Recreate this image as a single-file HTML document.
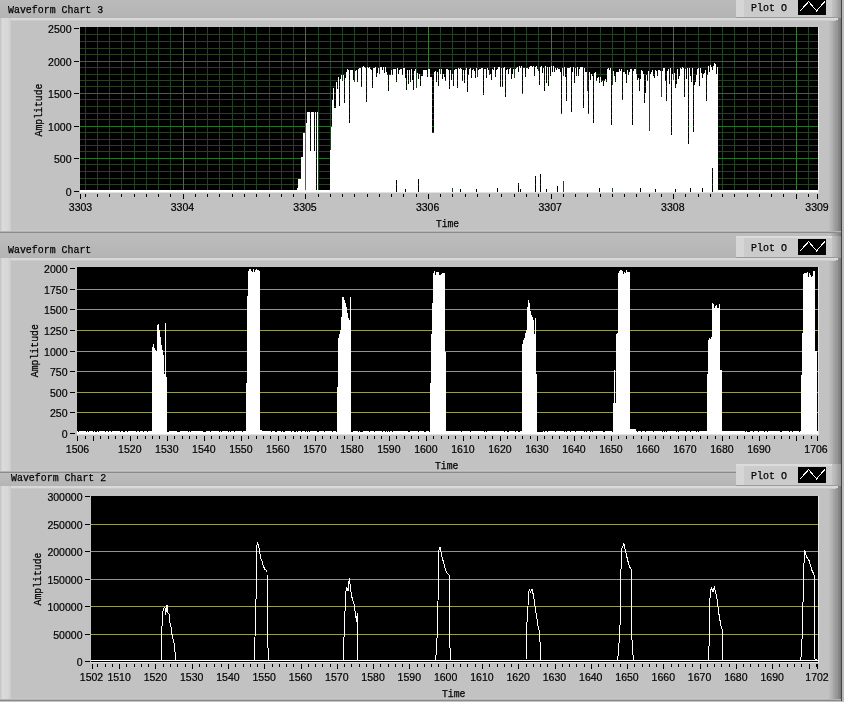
<!DOCTYPE html>
<html><head><meta charset="utf-8"><style>html,body{margin:0;padding:0;background:#c2c2c2;overflow:hidden}svg{display:block;will-change:transform}</style></head>
<body><svg width="844" height="702" viewBox="0 0 844 702" shape-rendering="crispEdges">
<defs><linearGradient id="bandg" x1="0" y1="0" x2="0" y2="1"><stop offset="0" stop-color="#bdbdbd"/><stop offset="1" stop-color="#b4b4b4"/></linearGradient></defs>
<rect x="0" y="0" width="844" height="702" fill="#c2c2c2"/>
<rect x="0" y="-8" width="844" height="26" fill="url(#bandg)"/>
<rect x="828" y="-8" width="1" height="26" fill="#c0c0c0"/>
<rect x="829" y="-8" width="1" height="26" fill="#bdbdbd"/>
<rect x="830" y="-8" width="1" height="26" fill="#b8b8b8"/>
<rect x="831" y="-8" width="1" height="26" fill="#b4b4b4"/>
<rect x="832" y="-8" width="1" height="26" fill="#b0b0b0"/>
<rect x="833" y="-8" width="1" height="26" fill="#a6a6a6"/>
<rect x="834" y="-8" width="1" height="26" fill="#a2a2a2"/>
<rect x="835" y="-8" width="1" height="26" fill="#9c9c9c"/>
<rect x="836" y="-8" width="1" height="26" fill="#989898"/>
<rect x="837" y="-8" width="1" height="26" fill="#949494"/>
<rect x="838" y="-8" width="1" height="26" fill="#888888"/>
<rect x="839" y="-8" width="1" height="26" fill="#848484"/>
<rect x="840" y="-8" width="1" height="26" fill="#7a7a7a"/>
<rect x="841" y="-8" width="1" height="26" fill="#444444"/>
<rect x="842" y="-8" width="1" height="26" fill="#bbbbbb"/>
<rect x="843" y="-8" width="1" height="26" fill="#bababa"/>
<rect x="0" y="18" width="844" height="215" fill="#c2c2c2"/>
<rect x="828" y="18" width="1" height="215" fill="#c0c0c0"/>
<rect x="829" y="18" width="1" height="215" fill="#bdbdbd"/>
<rect x="830" y="18" width="1" height="215" fill="#b8b8b8"/>
<rect x="831" y="18" width="1" height="215" fill="#b4b4b4"/>
<rect x="832" y="18" width="1" height="215" fill="#b0b0b0"/>
<rect x="833" y="18" width="1" height="215" fill="#a6a6a6"/>
<rect x="834" y="18" width="1" height="215" fill="#a2a2a2"/>
<rect x="835" y="18" width="1" height="215" fill="#9c9c9c"/>
<rect x="836" y="18" width="1" height="215" fill="#989898"/>
<rect x="837" y="18" width="1" height="215" fill="#949494"/>
<rect x="838" y="18" width="1" height="215" fill="#888888"/>
<rect x="839" y="18" width="1" height="215" fill="#848484"/>
<rect x="840" y="18" width="1" height="215" fill="#7a7a7a"/>
<rect x="841" y="18" width="1" height="215" fill="#444444"/>
<rect x="842" y="18" width="1" height="215" fill="#bbbbbb"/>
<rect x="843" y="18" width="1" height="215" fill="#bababa"/>
<rect x="0" y="18" width="838" height="2" fill="#d9d9d9"/>
<rect x="0" y="20" width="836" height="1" fill="#cacaca"/>
<rect x="0" y="18" width="1" height="214" fill="#c8c8c8"/>
<rect x="1" y="18" width="1" height="214" fill="#d0d0d0"/>
<rect x="2" y="18" width="1" height="214" fill="#dadada"/>
<rect x="3" y="18" width="1" height="214" fill="#dbdbdb"/>
<rect x="4" y="18" width="1" height="214" fill="#d8d8d8"/>
<rect x="5" y="18" width="1" height="214" fill="#d8d8d8"/>
<rect x="6" y="18" width="1" height="214" fill="#d8d8d8"/>
<rect x="7" y="18" width="1" height="214" fill="#d8d8d8"/>
<rect x="8" y="18" width="1" height="214" fill="#d4d4d4"/>
<rect x="9" y="18" width="1" height="214" fill="#d2d2d2"/>
<rect x="10" y="18" width="1" height="214" fill="#cccccc"/>
<rect x="11" y="230" width="817" height="1" fill="#c7c7c7"/>
<rect x="0" y="231" width="841" height="1" fill="#b4b4b4"/>
<rect x="0" y="232" width="841" height="1" fill="#8a8a8a"/>
<rect x="0" y="233" width="844" height="25" fill="url(#bandg)"/>
<rect x="828" y="233" width="1" height="25" fill="#c0c0c0"/>
<rect x="829" y="233" width="1" height="25" fill="#bdbdbd"/>
<rect x="830" y="233" width="1" height="25" fill="#b8b8b8"/>
<rect x="831" y="233" width="1" height="25" fill="#b4b4b4"/>
<rect x="832" y="233" width="1" height="25" fill="#b0b0b0"/>
<rect x="833" y="233" width="1" height="25" fill="#a6a6a6"/>
<rect x="834" y="233" width="1" height="25" fill="#a2a2a2"/>
<rect x="835" y="233" width="1" height="25" fill="#9c9c9c"/>
<rect x="836" y="233" width="1" height="25" fill="#989898"/>
<rect x="837" y="233" width="1" height="25" fill="#949494"/>
<rect x="838" y="233" width="1" height="25" fill="#888888"/>
<rect x="839" y="233" width="1" height="25" fill="#848484"/>
<rect x="840" y="233" width="1" height="25" fill="#7a7a7a"/>
<rect x="841" y="233" width="1" height="25" fill="#444444"/>
<rect x="842" y="233" width="1" height="25" fill="#bbbbbb"/>
<rect x="843" y="233" width="1" height="25" fill="#bababa"/>
<rect x="0" y="258" width="844" height="215" fill="#c2c2c2"/>
<rect x="828" y="258" width="1" height="215" fill="#c0c0c0"/>
<rect x="829" y="258" width="1" height="215" fill="#bdbdbd"/>
<rect x="830" y="258" width="1" height="215" fill="#b8b8b8"/>
<rect x="831" y="258" width="1" height="215" fill="#b4b4b4"/>
<rect x="832" y="258" width="1" height="215" fill="#b0b0b0"/>
<rect x="833" y="258" width="1" height="215" fill="#a6a6a6"/>
<rect x="834" y="258" width="1" height="215" fill="#a2a2a2"/>
<rect x="835" y="258" width="1" height="215" fill="#9c9c9c"/>
<rect x="836" y="258" width="1" height="215" fill="#989898"/>
<rect x="837" y="258" width="1" height="215" fill="#949494"/>
<rect x="838" y="258" width="1" height="215" fill="#888888"/>
<rect x="839" y="258" width="1" height="215" fill="#848484"/>
<rect x="840" y="258" width="1" height="215" fill="#7a7a7a"/>
<rect x="841" y="258" width="1" height="215" fill="#444444"/>
<rect x="842" y="258" width="1" height="215" fill="#bbbbbb"/>
<rect x="843" y="258" width="1" height="215" fill="#bababa"/>
<rect x="0" y="258" width="838" height="2" fill="#d9d9d9"/>
<rect x="0" y="260" width="836" height="1" fill="#cacaca"/>
<rect x="0" y="258" width="1" height="214" fill="#c8c8c8"/>
<rect x="1" y="258" width="1" height="214" fill="#d0d0d0"/>
<rect x="2" y="258" width="1" height="214" fill="#dadada"/>
<rect x="3" y="258" width="1" height="214" fill="#dbdbdb"/>
<rect x="4" y="258" width="1" height="214" fill="#d8d8d8"/>
<rect x="5" y="258" width="1" height="214" fill="#d8d8d8"/>
<rect x="6" y="258" width="1" height="214" fill="#d8d8d8"/>
<rect x="7" y="258" width="1" height="214" fill="#d8d8d8"/>
<rect x="8" y="258" width="1" height="214" fill="#d4d4d4"/>
<rect x="9" y="258" width="1" height="214" fill="#d2d2d2"/>
<rect x="10" y="258" width="1" height="214" fill="#cccccc"/>
<rect x="11" y="470" width="817" height="1" fill="#c7c7c7"/>
<rect x="0" y="471" width="841" height="1" fill="#b4b4b4"/>
<rect x="0" y="472" width="841" height="1" fill="#8a8a8a"/>
<rect x="0" y="473" width="844" height="13" fill="url(#bandg)"/>
<rect x="828" y="473" width="1" height="13" fill="#c0c0c0"/>
<rect x="829" y="473" width="1" height="13" fill="#bdbdbd"/>
<rect x="830" y="473" width="1" height="13" fill="#b8b8b8"/>
<rect x="831" y="473" width="1" height="13" fill="#b4b4b4"/>
<rect x="832" y="473" width="1" height="13" fill="#b0b0b0"/>
<rect x="833" y="473" width="1" height="13" fill="#a6a6a6"/>
<rect x="834" y="473" width="1" height="13" fill="#a2a2a2"/>
<rect x="835" y="473" width="1" height="13" fill="#9c9c9c"/>
<rect x="836" y="473" width="1" height="13" fill="#989898"/>
<rect x="837" y="473" width="1" height="13" fill="#949494"/>
<rect x="838" y="473" width="1" height="13" fill="#888888"/>
<rect x="839" y="473" width="1" height="13" fill="#848484"/>
<rect x="840" y="473" width="1" height="13" fill="#7a7a7a"/>
<rect x="841" y="473" width="1" height="13" fill="#444444"/>
<rect x="842" y="473" width="1" height="13" fill="#bbbbbb"/>
<rect x="843" y="473" width="1" height="13" fill="#bababa"/>
<rect x="0" y="486" width="844" height="215" fill="#c2c2c2"/>
<rect x="828" y="486" width="1" height="215" fill="#c0c0c0"/>
<rect x="829" y="486" width="1" height="215" fill="#bdbdbd"/>
<rect x="830" y="486" width="1" height="215" fill="#b8b8b8"/>
<rect x="831" y="486" width="1" height="215" fill="#b4b4b4"/>
<rect x="832" y="486" width="1" height="215" fill="#b0b0b0"/>
<rect x="833" y="486" width="1" height="215" fill="#a6a6a6"/>
<rect x="834" y="486" width="1" height="215" fill="#a2a2a2"/>
<rect x="835" y="486" width="1" height="215" fill="#9c9c9c"/>
<rect x="836" y="486" width="1" height="215" fill="#989898"/>
<rect x="837" y="486" width="1" height="215" fill="#949494"/>
<rect x="838" y="486" width="1" height="215" fill="#888888"/>
<rect x="839" y="486" width="1" height="215" fill="#848484"/>
<rect x="840" y="486" width="1" height="215" fill="#7a7a7a"/>
<rect x="841" y="486" width="1" height="215" fill="#444444"/>
<rect x="842" y="486" width="1" height="215" fill="#bbbbbb"/>
<rect x="843" y="486" width="1" height="215" fill="#bababa"/>
<rect x="0" y="486" width="838" height="2" fill="#d9d9d9"/>
<rect x="0" y="488" width="836" height="1" fill="#cacaca"/>
<rect x="0" y="486" width="1" height="214" fill="#c8c8c8"/>
<rect x="1" y="486" width="1" height="214" fill="#d0d0d0"/>
<rect x="2" y="486" width="1" height="214" fill="#dadada"/>
<rect x="3" y="486" width="1" height="214" fill="#dbdbdb"/>
<rect x="4" y="486" width="1" height="214" fill="#d8d8d8"/>
<rect x="5" y="486" width="1" height="214" fill="#d8d8d8"/>
<rect x="6" y="486" width="1" height="214" fill="#d8d8d8"/>
<rect x="7" y="486" width="1" height="214" fill="#d8d8d8"/>
<rect x="8" y="486" width="1" height="214" fill="#d4d4d4"/>
<rect x="9" y="486" width="1" height="214" fill="#d2d2d2"/>
<rect x="10" y="486" width="1" height="214" fill="#cccccc"/>
<rect x="11" y="698" width="817" height="1" fill="#c7c7c7"/>
<rect x="0" y="699" width="841" height="1" fill="#b4b4b4"/>
<rect x="0" y="700" width="841" height="1" fill="#8a8a8a"/>
<rect x="80" y="27" width="738" height="165" fill="#000"/>
<rect x="85" y="27" width="1" height="165" fill="#24422a"/>
<rect x="97" y="27" width="1" height="165" fill="#24422a"/>
<rect x="109" y="27" width="1" height="165" fill="#24422a"/>
<rect x="121" y="27" width="1" height="165" fill="#24422a"/>
<rect x="134" y="27" width="1" height="165" fill="#24422a"/>
<rect x="146" y="27" width="1" height="165" fill="#24422a"/>
<rect x="158" y="27" width="1" height="165" fill="#24422a"/>
<rect x="170" y="27" width="1" height="165" fill="#24422a"/>
<rect x="195" y="27" width="1" height="165" fill="#24422a"/>
<rect x="207" y="27" width="1" height="165" fill="#24422a"/>
<rect x="219" y="27" width="1" height="165" fill="#24422a"/>
<rect x="232" y="27" width="1" height="165" fill="#24422a"/>
<rect x="244" y="27" width="1" height="165" fill="#24422a"/>
<rect x="256" y="27" width="1" height="165" fill="#24422a"/>
<rect x="269" y="27" width="1" height="165" fill="#24422a"/>
<rect x="281" y="27" width="1" height="165" fill="#24422a"/>
<rect x="293" y="27" width="1" height="165" fill="#24422a"/>
<rect x="318" y="27" width="1" height="165" fill="#24422a"/>
<rect x="330" y="27" width="1" height="165" fill="#24422a"/>
<rect x="342" y="27" width="1" height="165" fill="#24422a"/>
<rect x="354" y="27" width="1" height="165" fill="#24422a"/>
<rect x="367" y="27" width="1" height="165" fill="#24422a"/>
<rect x="379" y="27" width="1" height="165" fill="#24422a"/>
<rect x="391" y="27" width="1" height="165" fill="#24422a"/>
<rect x="403" y="27" width="1" height="165" fill="#24422a"/>
<rect x="416" y="27" width="1" height="165" fill="#24422a"/>
<rect x="440" y="27" width="1" height="165" fill="#24422a"/>
<rect x="452" y="27" width="1" height="165" fill="#24422a"/>
<rect x="465" y="27" width="1" height="165" fill="#24422a"/>
<rect x="477" y="27" width="1" height="165" fill="#24422a"/>
<rect x="489" y="27" width="1" height="165" fill="#24422a"/>
<rect x="501" y="27" width="1" height="165" fill="#24422a"/>
<rect x="514" y="27" width="1" height="165" fill="#24422a"/>
<rect x="526" y="27" width="1" height="165" fill="#24422a"/>
<rect x="538" y="27" width="1" height="165" fill="#24422a"/>
<rect x="563" y="27" width="1" height="165" fill="#24422a"/>
<rect x="575" y="27" width="1" height="165" fill="#24422a"/>
<rect x="587" y="27" width="1" height="165" fill="#24422a"/>
<rect x="600" y="27" width="1" height="165" fill="#24422a"/>
<rect x="612" y="27" width="1" height="165" fill="#24422a"/>
<rect x="624" y="27" width="1" height="165" fill="#24422a"/>
<rect x="636" y="27" width="1" height="165" fill="#24422a"/>
<rect x="649" y="27" width="1" height="165" fill="#24422a"/>
<rect x="661" y="27" width="1" height="165" fill="#24422a"/>
<rect x="685" y="27" width="1" height="165" fill="#24422a"/>
<rect x="698" y="27" width="1" height="165" fill="#24422a"/>
<rect x="710" y="27" width="1" height="165" fill="#24422a"/>
<rect x="722" y="27" width="1" height="165" fill="#24422a"/>
<rect x="734" y="27" width="1" height="165" fill="#24422a"/>
<rect x="747" y="27" width="1" height="165" fill="#24422a"/>
<rect x="759" y="27" width="1" height="165" fill="#24422a"/>
<rect x="771" y="27" width="1" height="165" fill="#24422a"/>
<rect x="783" y="27" width="1" height="165" fill="#24422a"/>
<rect x="808" y="27" width="1" height="165" fill="#24422a"/>
<rect x="80" y="184" width="738" height="1" fill="#2a3f24"/>
<rect x="80" y="178" width="738" height="1" fill="#2a3f24"/>
<rect x="80" y="171" width="738" height="1" fill="#2a3f24"/>
<rect x="80" y="164" width="738" height="1" fill="#2a3f24"/>
<rect x="80" y="151" width="738" height="1" fill="#2a3f24"/>
<rect x="80" y="145" width="738" height="1" fill="#2a3f24"/>
<rect x="80" y="139" width="738" height="1" fill="#2a3f24"/>
<rect x="80" y="132" width="738" height="1" fill="#2a3f24"/>
<rect x="80" y="119" width="738" height="1" fill="#2a3f24"/>
<rect x="80" y="113" width="738" height="1" fill="#2a3f24"/>
<rect x="80" y="106" width="738" height="1" fill="#2a3f24"/>
<rect x="80" y="99" width="738" height="1" fill="#2a3f24"/>
<rect x="80" y="86" width="738" height="1" fill="#2a3f24"/>
<rect x="80" y="80" width="738" height="1" fill="#2a3f24"/>
<rect x="80" y="74" width="738" height="1" fill="#2a3f24"/>
<rect x="80" y="67" width="738" height="1" fill="#2a3f24"/>
<rect x="80" y="54" width="738" height="1" fill="#2a3f24"/>
<rect x="80" y="48" width="738" height="1" fill="#2a3f24"/>
<rect x="80" y="41" width="738" height="1" fill="#2a3f24"/>
<rect x="80" y="34" width="738" height="1" fill="#2a3f24"/>
<rect x="183" y="27" width="1" height="165" fill="#3a763a"/>
<rect x="305" y="27" width="1" height="165" fill="#3a763a"/>
<rect x="428" y="27" width="1" height="165" fill="#3a763a"/>
<rect x="551" y="27" width="1" height="165" fill="#3a763a"/>
<rect x="673" y="27" width="1" height="165" fill="#3a763a"/>
<rect x="796" y="27" width="1" height="165" fill="#3a763a"/>
<rect x="80" y="158" width="738" height="1" fill="#2a6e2a"/>
<rect x="80" y="126" width="738" height="1" fill="#2a6e2a"/>
<rect x="80" y="93" width="738" height="1" fill="#2a6e2a"/>
<rect x="80" y="61" width="738" height="1" fill="#2a6e2a"/>
<rect x="80" y="190" width="217" height="2" fill="#fff"/>
<rect x="297" y="188" width="1" height="4" fill="#fff"/>
<rect x="298" y="179" width="3" height="13" fill="#fff"/>
<rect x="301" y="157" width="2" height="35" fill="#fff"/>
<rect x="303" y="133" width="2" height="59" fill="#fff"/>
<rect x="305" y="190" width="1" height="2" fill="#fff"/>
<rect x="306" y="123" width="1" height="69" fill="#fff"/>
<rect x="307" y="112" width="3" height="80" fill="#fff"/>
<rect x="310" y="151" width="1" height="41" fill="#fff"/>
<rect x="311" y="112" width="3" height="80" fill="#fff"/>
<rect x="314" y="151" width="1" height="41" fill="#fff"/>
<rect x="315" y="112" width="1" height="80" fill="#fff"/>
<rect x="316" y="190" width="1" height="2" fill="#fff"/>
<rect x="317" y="112" width="1" height="80" fill="#fff"/>
<rect x="318" y="190" width="12" height="2" fill="#fff"/>
<rect x="330" y="150" width="1" height="42" fill="#fff"/>
<rect x="331" y="127" width="1" height="65" fill="#fff"/>
<rect x="332" y="100" width="1" height="92" fill="#fff"/>
<rect x="333" y="88" width="1" height="104" fill="#fff"/>
<rect x="334" y="108" width="2" height="84" fill="#fff"/>
<rect x="336" y="82" width="1" height="110" fill="#fff"/>
<rect x="337" y="89" width="1" height="103" fill="#fff"/>
<rect x="338" y="77" width="1" height="115" fill="#fff"/>
<rect x="339" y="106" width="1" height="86" fill="#fff"/>
<rect x="340" y="79" width="1" height="113" fill="#fff"/>
<rect x="341" y="75" width="1" height="117" fill="#fff"/>
<rect x="342" y="81" width="1" height="111" fill="#fff"/>
<rect x="343" y="75" width="1" height="117" fill="#fff"/>
<rect x="344" y="103" width="1" height="89" fill="#fff"/>
<rect x="345" y="78" width="1" height="114" fill="#fff"/>
<rect x="346" y="72" width="1" height="120" fill="#fff"/>
<rect x="347" y="69" width="1" height="123" fill="#fff"/>
<rect x="348" y="70" width="1" height="122" fill="#fff"/>
<rect x="349" y="123" width="1" height="69" fill="#fff"/>
<rect x="350" y="70" width="3" height="122" fill="#fff"/>
<rect x="353" y="80" width="1" height="112" fill="#fff"/>
<rect x="354" y="82" width="1" height="110" fill="#fff"/>
<rect x="355" y="71" width="1" height="121" fill="#fff"/>
<rect x="356" y="70" width="1" height="122" fill="#fff"/>
<rect x="357" y="82" width="1" height="110" fill="#fff"/>
<rect x="358" y="69" width="1" height="123" fill="#fff"/>
<rect x="359" y="68" width="2" height="124" fill="#fff"/>
<rect x="361" y="87" width="1" height="105" fill="#fff"/>
<rect x="362" y="67" width="1" height="125" fill="#fff"/>
<rect x="363" y="66" width="1" height="126" fill="#fff"/>
<rect x="364" y="67" width="1" height="125" fill="#fff"/>
<rect x="365" y="68" width="1" height="124" fill="#fff"/>
<rect x="366" y="102" width="1" height="90" fill="#fff"/>
<rect x="367" y="67" width="1" height="125" fill="#fff"/>
<rect x="368" y="68" width="1" height="124" fill="#fff"/>
<rect x="369" y="67" width="1" height="125" fill="#fff"/>
<rect x="370" y="69" width="1" height="123" fill="#fff"/>
<rect x="371" y="70" width="1" height="122" fill="#fff"/>
<rect x="372" y="88" width="1" height="104" fill="#fff"/>
<rect x="373" y="68" width="2" height="124" fill="#fff"/>
<rect x="375" y="67" width="1" height="125" fill="#fff"/>
<rect x="376" y="77" width="1" height="115" fill="#fff"/>
<rect x="377" y="73" width="1" height="119" fill="#fff"/>
<rect x="378" y="68" width="1" height="124" fill="#fff"/>
<rect x="379" y="74" width="1" height="118" fill="#fff"/>
<rect x="380" y="67" width="2" height="125" fill="#fff"/>
<rect x="382" y="70" width="1" height="122" fill="#fff"/>
<rect x="383" y="67" width="1" height="125" fill="#fff"/>
<rect x="384" y="73" width="1" height="119" fill="#fff"/>
<rect x="385" y="67" width="1" height="125" fill="#fff"/>
<rect x="386" y="72" width="1" height="120" fill="#fff"/>
<rect x="387" y="75" width="1" height="117" fill="#fff"/>
<rect x="388" y="91" width="1" height="101" fill="#fff"/>
<rect x="389" y="75" width="2" height="117" fill="#fff"/>
<rect x="391" y="70" width="1" height="122" fill="#fff"/>
<rect x="392" y="75" width="1" height="117" fill="#fff"/>
<rect x="393" y="69" width="3" height="123" fill="#fff"/>
<rect x="396" y="82" width="1" height="98" fill="#fff"/>
<rect x="397" y="68" width="1" height="124" fill="#fff"/>
<rect x="398" y="74" width="1" height="118" fill="#fff"/>
<rect x="399" y="70" width="1" height="122" fill="#fff"/>
<rect x="400" y="69" width="2" height="123" fill="#fff"/>
<rect x="402" y="75" width="1" height="117" fill="#fff"/>
<rect x="403" y="68" width="2" height="124" fill="#fff"/>
<rect x="405" y="78" width="1" height="111" fill="#fff"/>
<rect x="406" y="90" width="1" height="102" fill="#fff"/>
<rect x="407" y="70" width="1" height="122" fill="#fff"/>
<rect x="408" y="84" width="1" height="108" fill="#fff"/>
<rect x="409" y="70" width="1" height="122" fill="#fff"/>
<rect x="410" y="82" width="1" height="110" fill="#fff"/>
<rect x="411" y="69" width="1" height="123" fill="#fff"/>
<rect x="412" y="80" width="1" height="112" fill="#fff"/>
<rect x="413" y="90" width="1" height="102" fill="#fff"/>
<rect x="414" y="71" width="1" height="121" fill="#fff"/>
<rect x="415" y="69" width="1" height="123" fill="#fff"/>
<rect x="416" y="88" width="1" height="104" fill="#fff"/>
<rect x="417" y="73" width="1" height="119" fill="#fff"/>
<rect x="418" y="79" width="1" height="100" fill="#fff"/>
<rect x="419" y="74" width="1" height="118" fill="#fff"/>
<rect x="420" y="86" width="1" height="106" fill="#fff"/>
<rect x="421" y="76" width="2" height="116" fill="#fff"/>
<rect x="423" y="70" width="4" height="122" fill="#fff"/>
<rect x="427" y="77" width="1" height="115" fill="#fff"/>
<rect x="428" y="69" width="2" height="123" fill="#fff"/>
<rect x="430" y="77" width="2" height="115" fill="#fff"/>
<rect x="432" y="133" width="2" height="59" fill="#fff"/>
<rect x="434" y="72" width="1" height="120" fill="#fff"/>
<rect x="435" y="71" width="1" height="121" fill="#fff"/>
<rect x="436" y="82" width="1" height="110" fill="#fff"/>
<rect x="437" y="72" width="1" height="120" fill="#fff"/>
<rect x="438" y="86" width="1" height="106" fill="#fff"/>
<rect x="439" y="69" width="1" height="123" fill="#fff"/>
<rect x="440" y="74" width="1" height="118" fill="#fff"/>
<rect x="441" y="69" width="1" height="123" fill="#fff"/>
<rect x="442" y="79" width="1" height="113" fill="#fff"/>
<rect x="443" y="74" width="1" height="118" fill="#fff"/>
<rect x="444" y="77" width="1" height="115" fill="#fff"/>
<rect x="445" y="81" width="1" height="111" fill="#fff"/>
<rect x="446" y="69" width="2" height="123" fill="#fff"/>
<rect x="448" y="70" width="1" height="122" fill="#fff"/>
<rect x="449" y="89" width="1" height="103" fill="#fff"/>
<rect x="450" y="70" width="1" height="122" fill="#fff"/>
<rect x="451" y="80" width="1" height="112" fill="#fff"/>
<rect x="452" y="74" width="1" height="114" fill="#fff"/>
<rect x="453" y="86" width="1" height="106" fill="#fff"/>
<rect x="454" y="70" width="1" height="122" fill="#fff"/>
<rect x="455" y="69" width="2" height="123" fill="#fff"/>
<rect x="457" y="88" width="1" height="104" fill="#fff"/>
<rect x="458" y="68" width="1" height="124" fill="#fff"/>
<rect x="459" y="69" width="1" height="123" fill="#fff"/>
<rect x="460" y="68" width="1" height="121" fill="#fff"/>
<rect x="461" y="69" width="1" height="123" fill="#fff"/>
<rect x="462" y="81" width="1" height="111" fill="#fff"/>
<rect x="463" y="70" width="1" height="122" fill="#fff"/>
<rect x="464" y="83" width="1" height="109" fill="#fff"/>
<rect x="465" y="70" width="1" height="122" fill="#fff"/>
<rect x="466" y="68" width="1" height="124" fill="#fff"/>
<rect x="467" y="92" width="1" height="100" fill="#fff"/>
<rect x="468" y="75" width="1" height="117" fill="#fff"/>
<rect x="469" y="69" width="1" height="123" fill="#fff"/>
<rect x="470" y="68" width="1" height="124" fill="#fff"/>
<rect x="471" y="78" width="1" height="114" fill="#fff"/>
<rect x="472" y="70" width="1" height="122" fill="#fff"/>
<rect x="473" y="69" width="1" height="123" fill="#fff"/>
<rect x="474" y="71" width="1" height="121" fill="#fff"/>
<rect x="475" y="78" width="1" height="114" fill="#fff"/>
<rect x="476" y="68" width="1" height="121" fill="#fff"/>
<rect x="477" y="77" width="1" height="115" fill="#fff"/>
<rect x="478" y="70" width="1" height="122" fill="#fff"/>
<rect x="479" y="69" width="2" height="123" fill="#fff"/>
<rect x="481" y="68" width="2" height="124" fill="#fff"/>
<rect x="483" y="95" width="1" height="97" fill="#fff"/>
<rect x="484" y="69" width="2" height="123" fill="#fff"/>
<rect x="486" y="78" width="1" height="114" fill="#fff"/>
<rect x="487" y="68" width="1" height="124" fill="#fff"/>
<rect x="488" y="70" width="1" height="122" fill="#fff"/>
<rect x="489" y="75" width="1" height="117" fill="#fff"/>
<rect x="490" y="74" width="1" height="118" fill="#fff"/>
<rect x="491" y="80" width="1" height="112" fill="#fff"/>
<rect x="492" y="69" width="1" height="123" fill="#fff"/>
<rect x="493" y="70" width="1" height="122" fill="#fff"/>
<rect x="494" y="67" width="1" height="125" fill="#fff"/>
<rect x="495" y="77" width="1" height="115" fill="#fff"/>
<rect x="496" y="70" width="1" height="122" fill="#fff"/>
<rect x="497" y="69" width="1" height="119" fill="#fff"/>
<rect x="498" y="67" width="2" height="125" fill="#fff"/>
<rect x="500" y="87" width="1" height="105" fill="#fff"/>
<rect x="501" y="68" width="1" height="124" fill="#fff"/>
<rect x="502" y="87" width="1" height="105" fill="#fff"/>
<rect x="503" y="68" width="1" height="124" fill="#fff"/>
<rect x="504" y="67" width="1" height="125" fill="#fff"/>
<rect x="505" y="97" width="1" height="95" fill="#fff"/>
<rect x="506" y="70" width="1" height="122" fill="#fff"/>
<rect x="507" y="69" width="1" height="123" fill="#fff"/>
<rect x="508" y="74" width="1" height="118" fill="#fff"/>
<rect x="509" y="69" width="1" height="123" fill="#fff"/>
<rect x="510" y="68" width="1" height="124" fill="#fff"/>
<rect x="511" y="79" width="1" height="113" fill="#fff"/>
<rect x="512" y="74" width="1" height="118" fill="#fff"/>
<rect x="513" y="69" width="1" height="123" fill="#fff"/>
<rect x="514" y="78" width="1" height="114" fill="#fff"/>
<rect x="515" y="69" width="1" height="123" fill="#fff"/>
<rect x="516" y="68" width="1" height="124" fill="#fff"/>
<rect x="517" y="67" width="1" height="125" fill="#fff"/>
<rect x="518" y="72" width="1" height="111" fill="#fff"/>
<rect x="519" y="66" width="1" height="126" fill="#fff"/>
<rect x="520" y="68" width="1" height="121" fill="#fff"/>
<rect x="521" y="66" width="1" height="126" fill="#fff"/>
<rect x="522" y="94" width="1" height="98" fill="#fff"/>
<rect x="523" y="68" width="2" height="124" fill="#fff"/>
<rect x="525" y="77" width="1" height="115" fill="#fff"/>
<rect x="526" y="68" width="2" height="124" fill="#fff"/>
<rect x="528" y="69" width="1" height="123" fill="#fff"/>
<rect x="529" y="67" width="1" height="125" fill="#fff"/>
<rect x="530" y="66" width="2" height="126" fill="#fff"/>
<rect x="532" y="67" width="1" height="125" fill="#fff"/>
<rect x="533" y="66" width="1" height="126" fill="#fff"/>
<rect x="534" y="76" width="1" height="116" fill="#fff"/>
<rect x="535" y="67" width="1" height="109" fill="#fff"/>
<rect x="536" y="66" width="1" height="126" fill="#fff"/>
<rect x="537" y="69" width="1" height="123" fill="#fff"/>
<rect x="538" y="71" width="1" height="121" fill="#fff"/>
<rect x="539" y="85" width="1" height="107" fill="#fff"/>
<rect x="540" y="67" width="1" height="107" fill="#fff"/>
<rect x="541" y="66" width="1" height="126" fill="#fff"/>
<rect x="542" y="73" width="1" height="119" fill="#fff"/>
<rect x="543" y="68" width="1" height="124" fill="#fff"/>
<rect x="544" y="91" width="1" height="101" fill="#fff"/>
<rect x="545" y="66" width="1" height="126" fill="#fff"/>
<rect x="546" y="83" width="1" height="106" fill="#fff"/>
<rect x="547" y="67" width="1" height="125" fill="#fff"/>
<rect x="548" y="86" width="1" height="106" fill="#fff"/>
<rect x="549" y="67" width="1" height="125" fill="#fff"/>
<rect x="550" y="76" width="1" height="116" fill="#fff"/>
<rect x="551" y="66" width="1" height="126" fill="#fff"/>
<rect x="552" y="72" width="1" height="120" fill="#fff"/>
<rect x="553" y="66" width="1" height="126" fill="#fff"/>
<rect x="554" y="72" width="1" height="120" fill="#fff"/>
<rect x="555" y="68" width="1" height="124" fill="#fff"/>
<rect x="556" y="70" width="1" height="122" fill="#fff"/>
<rect x="557" y="68" width="1" height="118" fill="#fff"/>
<rect x="558" y="69" width="2" height="123" fill="#fff"/>
<rect x="560" y="72" width="1" height="120" fill="#fff"/>
<rect x="561" y="114" width="1" height="78" fill="#fff"/>
<rect x="562" y="68" width="1" height="124" fill="#fff"/>
<rect x="563" y="76" width="1" height="105" fill="#fff"/>
<rect x="564" y="67" width="1" height="125" fill="#fff"/>
<rect x="565" y="77" width="1" height="115" fill="#fff"/>
<rect x="566" y="101" width="1" height="91" fill="#fff"/>
<rect x="567" y="68" width="3" height="124" fill="#fff"/>
<rect x="570" y="67" width="1" height="125" fill="#fff"/>
<rect x="571" y="112" width="1" height="80" fill="#fff"/>
<rect x="572" y="72" width="1" height="120" fill="#fff"/>
<rect x="573" y="67" width="1" height="125" fill="#fff"/>
<rect x="574" y="83" width="1" height="109" fill="#fff"/>
<rect x="575" y="68" width="1" height="124" fill="#fff"/>
<rect x="576" y="76" width="1" height="116" fill="#fff"/>
<rect x="577" y="67" width="1" height="125" fill="#fff"/>
<rect x="578" y="76" width="1" height="116" fill="#fff"/>
<rect x="579" y="69" width="1" height="123" fill="#fff"/>
<rect x="580" y="67" width="3" height="125" fill="#fff"/>
<rect x="583" y="108" width="1" height="84" fill="#fff"/>
<rect x="584" y="68" width="1" height="124" fill="#fff"/>
<rect x="585" y="72" width="2" height="120" fill="#fff"/>
<rect x="587" y="91" width="1" height="101" fill="#fff"/>
<rect x="588" y="114" width="1" height="78" fill="#fff"/>
<rect x="589" y="72" width="1" height="120" fill="#fff"/>
<rect x="590" y="80" width="1" height="112" fill="#fff"/>
<rect x="591" y="74" width="1" height="118" fill="#fff"/>
<rect x="592" y="76" width="1" height="116" fill="#fff"/>
<rect x="593" y="123" width="1" height="69" fill="#fff"/>
<rect x="594" y="73" width="1" height="119" fill="#fff"/>
<rect x="595" y="72" width="1" height="120" fill="#fff"/>
<rect x="596" y="81" width="1" height="111" fill="#fff"/>
<rect x="597" y="78" width="1" height="114" fill="#fff"/>
<rect x="598" y="77" width="1" height="115" fill="#fff"/>
<rect x="599" y="83" width="1" height="105" fill="#fff"/>
<rect x="600" y="77" width="1" height="115" fill="#fff"/>
<rect x="601" y="82" width="1" height="110" fill="#fff"/>
<rect x="602" y="81" width="1" height="111" fill="#fff"/>
<rect x="603" y="86" width="1" height="106" fill="#fff"/>
<rect x="604" y="81" width="1" height="111" fill="#fff"/>
<rect x="605" y="79" width="1" height="113" fill="#fff"/>
<rect x="606" y="82" width="1" height="110" fill="#fff"/>
<rect x="607" y="69" width="1" height="123" fill="#fff"/>
<rect x="608" y="68" width="1" height="124" fill="#fff"/>
<rect x="609" y="70" width="1" height="122" fill="#fff"/>
<rect x="610" y="68" width="1" height="124" fill="#fff"/>
<rect x="611" y="125" width="1" height="67" fill="#fff"/>
<rect x="612" y="85" width="1" height="103" fill="#fff"/>
<rect x="613" y="71" width="1" height="121" fill="#fff"/>
<rect x="614" y="76" width="1" height="116" fill="#fff"/>
<rect x="615" y="82" width="1" height="110" fill="#fff"/>
<rect x="616" y="72" width="3" height="120" fill="#fff"/>
<rect x="619" y="69" width="1" height="123" fill="#fff"/>
<rect x="620" y="71" width="1" height="121" fill="#fff"/>
<rect x="621" y="69" width="1" height="123" fill="#fff"/>
<rect x="622" y="100" width="1" height="92" fill="#fff"/>
<rect x="623" y="72" width="2" height="120" fill="#fff"/>
<rect x="625" y="74" width="1" height="118" fill="#fff"/>
<rect x="626" y="83" width="1" height="109" fill="#fff"/>
<rect x="627" y="70" width="1" height="122" fill="#fff"/>
<rect x="628" y="75" width="1" height="117" fill="#fff"/>
<rect x="629" y="72" width="1" height="120" fill="#fff"/>
<rect x="630" y="69" width="2" height="123" fill="#fff"/>
<rect x="632" y="125" width="1" height="67" fill="#fff"/>
<rect x="633" y="71" width="1" height="121" fill="#fff"/>
<rect x="634" y="69" width="2" height="123" fill="#fff"/>
<rect x="636" y="74" width="1" height="118" fill="#fff"/>
<rect x="637" y="80" width="1" height="112" fill="#fff"/>
<rect x="638" y="78" width="1" height="114" fill="#fff"/>
<rect x="639" y="91" width="1" height="101" fill="#fff"/>
<rect x="640" y="79" width="1" height="109" fill="#fff"/>
<rect x="641" y="70" width="1" height="122" fill="#fff"/>
<rect x="642" y="71" width="1" height="121" fill="#fff"/>
<rect x="643" y="74" width="1" height="118" fill="#fff"/>
<rect x="644" y="103" width="1" height="89" fill="#fff"/>
<rect x="645" y="93" width="1" height="99" fill="#fff"/>
<rect x="646" y="75" width="1" height="117" fill="#fff"/>
<rect x="647" y="81" width="1" height="111" fill="#fff"/>
<rect x="648" y="71" width="1" height="121" fill="#fff"/>
<rect x="649" y="131" width="1" height="61" fill="#fff"/>
<rect x="650" y="74" width="1" height="118" fill="#fff"/>
<rect x="651" y="72" width="1" height="120" fill="#fff"/>
<rect x="652" y="70" width="1" height="122" fill="#fff"/>
<rect x="653" y="76" width="1" height="116" fill="#fff"/>
<rect x="654" y="78" width="1" height="114" fill="#fff"/>
<rect x="655" y="70" width="1" height="119" fill="#fff"/>
<rect x="656" y="71" width="1" height="121" fill="#fff"/>
<rect x="657" y="76" width="1" height="116" fill="#fff"/>
<rect x="658" y="70" width="2" height="122" fill="#fff"/>
<rect x="660" y="71" width="1" height="121" fill="#fff"/>
<rect x="661" y="97" width="1" height="95" fill="#fff"/>
<rect x="662" y="71" width="1" height="121" fill="#fff"/>
<rect x="663" y="68" width="2" height="124" fill="#fff"/>
<rect x="665" y="81" width="1" height="111" fill="#fff"/>
<rect x="666" y="101" width="1" height="91" fill="#fff"/>
<rect x="667" y="71" width="1" height="121" fill="#fff"/>
<rect x="668" y="69" width="1" height="123" fill="#fff"/>
<rect x="669" y="84" width="1" height="108" fill="#fff"/>
<rect x="670" y="68" width="1" height="124" fill="#fff"/>
<rect x="671" y="135" width="1" height="57" fill="#fff"/>
<rect x="672" y="74" width="1" height="118" fill="#fff"/>
<rect x="673" y="80" width="1" height="112" fill="#fff"/>
<rect x="674" y="73" width="1" height="119" fill="#fff"/>
<rect x="675" y="88" width="1" height="101" fill="#fff"/>
<rect x="676" y="84" width="1" height="108" fill="#fff"/>
<rect x="677" y="69" width="1" height="123" fill="#fff"/>
<rect x="678" y="79" width="1" height="113" fill="#fff"/>
<rect x="679" y="76" width="1" height="116" fill="#fff"/>
<rect x="680" y="68" width="1" height="124" fill="#fff"/>
<rect x="681" y="69" width="1" height="123" fill="#fff"/>
<rect x="682" y="67" width="1" height="125" fill="#fff"/>
<rect x="683" y="68" width="1" height="124" fill="#fff"/>
<rect x="684" y="97" width="1" height="95" fill="#fff"/>
<rect x="685" y="69" width="1" height="123" fill="#fff"/>
<rect x="686" y="79" width="1" height="113" fill="#fff"/>
<rect x="687" y="68" width="1" height="124" fill="#fff"/>
<rect x="688" y="144" width="1" height="48" fill="#fff"/>
<rect x="689" y="68" width="1" height="124" fill="#fff"/>
<rect x="690" y="76" width="1" height="112" fill="#fff"/>
<rect x="691" y="82" width="1" height="110" fill="#fff"/>
<rect x="692" y="68" width="1" height="124" fill="#fff"/>
<rect x="693" y="132" width="1" height="60" fill="#fff"/>
<rect x="694" y="85" width="1" height="107" fill="#fff"/>
<rect x="695" y="82" width="1" height="110" fill="#fff"/>
<rect x="696" y="75" width="1" height="117" fill="#fff"/>
<rect x="697" y="69" width="1" height="123" fill="#fff"/>
<rect x="698" y="68" width="1" height="124" fill="#fff"/>
<rect x="699" y="86" width="1" height="106" fill="#fff"/>
<rect x="700" y="68" width="1" height="124" fill="#fff"/>
<rect x="701" y="73" width="1" height="119" fill="#fff"/>
<rect x="702" y="78" width="1" height="110" fill="#fff"/>
<rect x="703" y="74" width="1" height="118" fill="#fff"/>
<rect x="704" y="73" width="1" height="119" fill="#fff"/>
<rect x="705" y="70" width="1" height="122" fill="#fff"/>
<rect x="706" y="101" width="1" height="91" fill="#fff"/>
<rect x="707" y="75" width="1" height="117" fill="#fff"/>
<rect x="708" y="66" width="1" height="126" fill="#fff"/>
<rect x="709" y="72" width="1" height="120" fill="#fff"/>
<rect x="710" y="65" width="1" height="127" fill="#fff"/>
<rect x="711" y="67" width="1" height="125" fill="#fff"/>
<rect x="712" y="70" width="1" height="98" fill="#fff"/>
<rect x="713" y="66" width="1" height="126" fill="#fff"/>
<rect x="714" y="63" width="1" height="129" fill="#fff"/>
<rect x="715" y="64" width="1" height="128" fill="#fff"/>
<rect x="716" y="74" width="1" height="118" fill="#fff"/>
<rect x="717" y="67" width="1" height="125" fill="#fff"/>
<rect x="718" y="190" width="100" height="2" fill="#fff"/>
<rect x="818" y="27" width="1" height="166" fill="#e6e6e6"/>
<rect x="80" y="192" width="738" height="1" fill="#e2e2e2"/>
<rect x="74" y="28" width="5" height="1" fill="#000"/>
<text x="71.5" y="32.5" font-family="'Liberation Sans', sans-serif" stroke="#000" stroke-width="0.2" font-size="10.5" text-anchor="end" textLength="23.4" lengthAdjust="spacingAndGlyphs">2500</text>
<rect x="74" y="61" width="5" height="1" fill="#000"/>
<text x="71.5" y="65.5" font-family="'Liberation Sans', sans-serif" stroke="#000" stroke-width="0.2" font-size="10.5" text-anchor="end" textLength="23.4" lengthAdjust="spacingAndGlyphs">2000</text>
<rect x="74" y="93" width="5" height="1" fill="#000"/>
<text x="71.5" y="97.5" font-family="'Liberation Sans', sans-serif" stroke="#000" stroke-width="0.2" font-size="10.5" text-anchor="end" textLength="23.4" lengthAdjust="spacingAndGlyphs">1500</text>
<rect x="74" y="126" width="5" height="1" fill="#000"/>
<text x="71.5" y="130.5" font-family="'Liberation Sans', sans-serif" stroke="#000" stroke-width="0.2" font-size="10.5" text-anchor="end" textLength="23.4" lengthAdjust="spacingAndGlyphs">1000</text>
<rect x="74" y="158" width="5" height="1" fill="#000"/>
<text x="71.5" y="162.5" font-family="'Liberation Sans', sans-serif" stroke="#000" stroke-width="0.2" font-size="10.5" text-anchor="end" textLength="17.55" lengthAdjust="spacingAndGlyphs">500</text>
<rect x="74" y="191" width="5" height="1" fill="#000"/>
<text x="71.5" y="195.5" font-family="'Liberation Sans', sans-serif" stroke="#000" stroke-width="0.2" font-size="10.5" text-anchor="end" textLength="5.85" lengthAdjust="spacingAndGlyphs">0</text>
<rect x="85" y="194" width="1" height="3" fill="#000"/>
<rect x="97" y="194" width="1" height="3" fill="#000"/>
<rect x="109" y="194" width="1" height="3" fill="#000"/>
<rect x="121" y="194" width="1" height="3" fill="#000"/>
<rect x="134" y="194" width="1" height="3" fill="#000"/>
<rect x="146" y="194" width="1" height="3" fill="#000"/>
<rect x="158" y="194" width="1" height="3" fill="#000"/>
<rect x="170" y="194" width="1" height="3" fill="#000"/>
<rect x="183" y="194" width="1" height="3" fill="#000"/>
<rect x="195" y="194" width="1" height="3" fill="#000"/>
<rect x="207" y="194" width="1" height="3" fill="#000"/>
<rect x="219" y="194" width="1" height="3" fill="#000"/>
<rect x="232" y="194" width="1" height="3" fill="#000"/>
<rect x="244" y="194" width="1" height="3" fill="#000"/>
<rect x="256" y="194" width="1" height="3" fill="#000"/>
<rect x="269" y="194" width="1" height="3" fill="#000"/>
<rect x="281" y="194" width="1" height="3" fill="#000"/>
<rect x="293" y="194" width="1" height="3" fill="#000"/>
<rect x="305" y="194" width="1" height="3" fill="#000"/>
<rect x="318" y="194" width="1" height="3" fill="#000"/>
<rect x="330" y="194" width="1" height="3" fill="#000"/>
<rect x="342" y="194" width="1" height="3" fill="#000"/>
<rect x="354" y="194" width="1" height="3" fill="#000"/>
<rect x="367" y="194" width="1" height="3" fill="#000"/>
<rect x="379" y="194" width="1" height="3" fill="#000"/>
<rect x="391" y="194" width="1" height="3" fill="#000"/>
<rect x="403" y="194" width="1" height="3" fill="#000"/>
<rect x="416" y="194" width="1" height="3" fill="#000"/>
<rect x="428" y="194" width="1" height="3" fill="#000"/>
<rect x="440" y="194" width="1" height="3" fill="#000"/>
<rect x="452" y="194" width="1" height="3" fill="#000"/>
<rect x="465" y="194" width="1" height="3" fill="#000"/>
<rect x="477" y="194" width="1" height="3" fill="#000"/>
<rect x="489" y="194" width="1" height="3" fill="#000"/>
<rect x="501" y="194" width="1" height="3" fill="#000"/>
<rect x="514" y="194" width="1" height="3" fill="#000"/>
<rect x="526" y="194" width="1" height="3" fill="#000"/>
<rect x="538" y="194" width="1" height="3" fill="#000"/>
<rect x="551" y="194" width="1" height="3" fill="#000"/>
<rect x="563" y="194" width="1" height="3" fill="#000"/>
<rect x="575" y="194" width="1" height="3" fill="#000"/>
<rect x="587" y="194" width="1" height="3" fill="#000"/>
<rect x="600" y="194" width="1" height="3" fill="#000"/>
<rect x="612" y="194" width="1" height="3" fill="#000"/>
<rect x="624" y="194" width="1" height="3" fill="#000"/>
<rect x="636" y="194" width="1" height="3" fill="#000"/>
<rect x="649" y="194" width="1" height="3" fill="#000"/>
<rect x="661" y="194" width="1" height="3" fill="#000"/>
<rect x="673" y="194" width="1" height="3" fill="#000"/>
<rect x="685" y="194" width="1" height="3" fill="#000"/>
<rect x="698" y="194" width="1" height="3" fill="#000"/>
<rect x="710" y="194" width="1" height="3" fill="#000"/>
<rect x="722" y="194" width="1" height="3" fill="#000"/>
<rect x="734" y="194" width="1" height="3" fill="#000"/>
<rect x="747" y="194" width="1" height="3" fill="#000"/>
<rect x="759" y="194" width="1" height="3" fill="#000"/>
<rect x="771" y="194" width="1" height="3" fill="#000"/>
<rect x="783" y="194" width="1" height="3" fill="#000"/>
<rect x="796" y="194" width="1" height="3" fill="#000"/>
<rect x="808" y="194" width="1" height="3" fill="#000"/>
<rect x="183" y="194" width="1" height="5" fill="#000"/>
<rect x="305" y="194" width="1" height="5" fill="#000"/>
<rect x="428" y="194" width="1" height="5" fill="#000"/>
<rect x="551" y="194" width="1" height="5" fill="#000"/>
<rect x="673" y="194" width="1" height="5" fill="#000"/>
<rect x="796" y="194" width="1" height="5" fill="#000"/>
<rect x="817" y="194" width="1" height="5" fill="#000"/>
<text x="80.5" y="211" font-family="'Liberation Sans', sans-serif" stroke="#000" stroke-width="0.2" font-size="10.5" text-anchor="middle" textLength="23.4" lengthAdjust="spacingAndGlyphs">3303</text>
<text x="182.4" y="211" font-family="'Liberation Sans', sans-serif" stroke="#000" stroke-width="0.2" font-size="10.5" text-anchor="middle" textLength="23.4" lengthAdjust="spacingAndGlyphs">3304</text>
<text x="305" y="211" font-family="'Liberation Sans', sans-serif" stroke="#000" stroke-width="0.2" font-size="10.5" text-anchor="middle" textLength="23.4" lengthAdjust="spacingAndGlyphs">3305</text>
<text x="427.6" y="211" font-family="'Liberation Sans', sans-serif" stroke="#000" stroke-width="0.2" font-size="10.5" text-anchor="middle" textLength="23.4" lengthAdjust="spacingAndGlyphs">3306</text>
<text x="550.2" y="211" font-family="'Liberation Sans', sans-serif" stroke="#000" stroke-width="0.2" font-size="10.5" text-anchor="middle" textLength="23.4" lengthAdjust="spacingAndGlyphs">3307</text>
<text x="672.8" y="211" font-family="'Liberation Sans', sans-serif" stroke="#000" stroke-width="0.2" font-size="10.5" text-anchor="middle" textLength="23.4" lengthAdjust="spacingAndGlyphs">3308</text>
<text x="817" y="211" font-family="'Liberation Sans', sans-serif" stroke="#000" stroke-width="0.2" font-size="10.5" text-anchor="middle" textLength="23.4" lengthAdjust="spacingAndGlyphs">3309</text>
<rect x="80" y="194" width="1" height="5" fill="#000"/>
<text x="447.6" y="227" font-family="'Liberation Mono', monospace" stroke="#000" stroke-width="0.25" font-size="11" text-anchor="middle" textLength="23" lengthAdjust="spacingAndGlyphs">Time</text>
<text transform="translate(41.6,110) rotate(-90)" font-family="'Liberation Mono', monospace" stroke="#000" stroke-width="0.25" font-size="11" text-anchor="middle" textLength="53" lengthAdjust="spacingAndGlyphs">Amplitude</text>
<rect x="77" y="267" width="741" height="167" fill="#000"/>
<rect x="77" y="412" width="741" height="1" fill="#9a9a58"/>
<rect x="77" y="392" width="741" height="1" fill="#9a9a58"/>
<rect x="77" y="371" width="741" height="1" fill="#9a9a58"/>
<rect x="77" y="351" width="741" height="1" fill="#9a9a58"/>
<rect x="77" y="330" width="741" height="1" fill="#9a9a58"/>
<rect x="77" y="309" width="741" height="1" fill="#9a9a58"/>
<rect x="77" y="289" width="741" height="1" fill="#9a9a58"/>
<rect x="77" y="431" width="1" height="3" fill="#fff"/>
<rect x="78" y="432" width="1" height="2" fill="#fff"/>
<rect x="79" y="431" width="7" height="3" fill="#fff"/>
<rect x="86" y="432" width="1" height="2" fill="#fff"/>
<rect x="87" y="431" width="1" height="3" fill="#fff"/>
<rect x="88" y="432" width="1" height="2" fill="#fff"/>
<rect x="89" y="431" width="4" height="3" fill="#fff"/>
<rect x="93" y="432" width="1" height="2" fill="#fff"/>
<rect x="94" y="431" width="1" height="3" fill="#fff"/>
<rect x="95" y="432" width="2" height="2" fill="#fff"/>
<rect x="97" y="431" width="1" height="3" fill="#fff"/>
<rect x="98" y="432" width="1" height="2" fill="#fff"/>
<rect x="99" y="431" width="6" height="3" fill="#fff"/>
<rect x="105" y="432" width="1" height="2" fill="#fff"/>
<rect x="106" y="431" width="2" height="3" fill="#fff"/>
<rect x="108" y="432" width="1" height="2" fill="#fff"/>
<rect x="109" y="431" width="2" height="3" fill="#fff"/>
<rect x="111" y="432" width="1" height="2" fill="#fff"/>
<rect x="112" y="431" width="8" height="3" fill="#fff"/>
<rect x="120" y="432" width="1" height="2" fill="#fff"/>
<rect x="121" y="431" width="2" height="3" fill="#fff"/>
<rect x="123" y="432" width="2" height="2" fill="#fff"/>
<rect x="125" y="431" width="2" height="3" fill="#fff"/>
<rect x="127" y="432" width="1" height="2" fill="#fff"/>
<rect x="128" y="431" width="8" height="3" fill="#fff"/>
<rect x="136" y="432" width="1" height="2" fill="#fff"/>
<rect x="137" y="431" width="2" height="3" fill="#fff"/>
<rect x="139" y="432" width="1" height="2" fill="#fff"/>
<rect x="140" y="431" width="3" height="3" fill="#fff"/>
<rect x="143" y="432" width="1" height="2" fill="#fff"/>
<rect x="144" y="431" width="3" height="3" fill="#fff"/>
<rect x="147" y="432" width="1" height="2" fill="#fff"/>
<rect x="148" y="431" width="4" height="3" fill="#fff"/>
<rect x="152" y="347" width="1" height="87" fill="#fff"/>
<rect x="153" y="344" width="1" height="90" fill="#fff"/>
<rect x="154" y="348" width="1" height="86" fill="#fff"/>
<rect x="155" y="350" width="1" height="84" fill="#fff"/>
<rect x="156" y="351" width="1" height="83" fill="#fff"/>
<rect x="157" y="325" width="1" height="109" fill="#fff"/>
<rect x="158" y="324" width="1" height="110" fill="#fff"/>
<rect x="159" y="330" width="1" height="104" fill="#fff"/>
<rect x="160" y="337" width="1" height="97" fill="#fff"/>
<rect x="161" y="345" width="1" height="89" fill="#fff"/>
<rect x="162" y="350" width="1" height="84" fill="#fff"/>
<rect x="163" y="355" width="1" height="79" fill="#fff"/>
<rect x="164" y="374" width="1" height="60" fill="#fff"/>
<rect x="165" y="323" width="1" height="111" fill="#fff"/>
<rect x="166" y="377" width="1" height="57" fill="#fff"/>
<rect x="167" y="432" width="2" height="2" fill="#fff"/>
<rect x="169" y="431" width="8" height="3" fill="#fff"/>
<rect x="177" y="432" width="3" height="2" fill="#fff"/>
<rect x="180" y="431" width="8" height="3" fill="#fff"/>
<rect x="188" y="432" width="1" height="2" fill="#fff"/>
<rect x="189" y="431" width="1" height="3" fill="#fff"/>
<rect x="190" y="432" width="1" height="2" fill="#fff"/>
<rect x="191" y="431" width="12" height="3" fill="#fff"/>
<rect x="203" y="432" width="3" height="2" fill="#fff"/>
<rect x="206" y="431" width="4" height="3" fill="#fff"/>
<rect x="210" y="432" width="1" height="2" fill="#fff"/>
<rect x="211" y="431" width="8" height="3" fill="#fff"/>
<rect x="219" y="432" width="1" height="2" fill="#fff"/>
<rect x="220" y="431" width="1" height="3" fill="#fff"/>
<rect x="221" y="432" width="1" height="2" fill="#fff"/>
<rect x="222" y="431" width="6" height="3" fill="#fff"/>
<rect x="228" y="432" width="1" height="2" fill="#fff"/>
<rect x="229" y="431" width="1" height="3" fill="#fff"/>
<rect x="230" y="432" width="1" height="2" fill="#fff"/>
<rect x="231" y="431" width="3" height="3" fill="#fff"/>
<rect x="234" y="432" width="1" height="2" fill="#fff"/>
<rect x="235" y="431" width="7" height="3" fill="#fff"/>
<rect x="242" y="432" width="1" height="2" fill="#fff"/>
<rect x="243" y="431" width="3" height="3" fill="#fff"/>
<rect x="246" y="383" width="1" height="51" fill="#fff"/>
<rect x="247" y="296" width="1" height="138" fill="#fff"/>
<rect x="248" y="271" width="1" height="163" fill="#fff"/>
<rect x="249" y="269" width="2" height="165" fill="#fff"/>
<rect x="251" y="271" width="1" height="163" fill="#fff"/>
<rect x="252" y="272" width="1" height="162" fill="#fff"/>
<rect x="253" y="269" width="1" height="165" fill="#fff"/>
<rect x="254" y="272" width="1" height="162" fill="#fff"/>
<rect x="255" y="270" width="1" height="164" fill="#fff"/>
<rect x="256" y="269" width="1" height="165" fill="#fff"/>
<rect x="257" y="270" width="2" height="164" fill="#fff"/>
<rect x="259" y="271" width="1" height="163" fill="#fff"/>
<rect x="260" y="430" width="2" height="4" fill="#fff"/>
<rect x="262" y="431" width="9" height="3" fill="#fff"/>
<rect x="271" y="432" width="1" height="2" fill="#fff"/>
<rect x="272" y="431" width="3" height="3" fill="#fff"/>
<rect x="275" y="432" width="2" height="2" fill="#fff"/>
<rect x="277" y="431" width="4" height="3" fill="#fff"/>
<rect x="281" y="432" width="1" height="2" fill="#fff"/>
<rect x="282" y="431" width="1" height="3" fill="#fff"/>
<rect x="283" y="432" width="2" height="2" fill="#fff"/>
<rect x="285" y="431" width="6" height="3" fill="#fff"/>
<rect x="291" y="432" width="1" height="2" fill="#fff"/>
<rect x="292" y="431" width="2" height="3" fill="#fff"/>
<rect x="294" y="432" width="2" height="2" fill="#fff"/>
<rect x="296" y="431" width="1" height="3" fill="#fff"/>
<rect x="297" y="432" width="1" height="2" fill="#fff"/>
<rect x="298" y="431" width="3" height="3" fill="#fff"/>
<rect x="301" y="432" width="1" height="2" fill="#fff"/>
<rect x="302" y="431" width="3" height="3" fill="#fff"/>
<rect x="305" y="432" width="1" height="2" fill="#fff"/>
<rect x="306" y="431" width="1" height="3" fill="#fff"/>
<rect x="307" y="432" width="1" height="2" fill="#fff"/>
<rect x="308" y="431" width="1" height="3" fill="#fff"/>
<rect x="309" y="432" width="1" height="2" fill="#fff"/>
<rect x="310" y="431" width="7" height="3" fill="#fff"/>
<rect x="317" y="432" width="2" height="2" fill="#fff"/>
<rect x="319" y="431" width="5" height="3" fill="#fff"/>
<rect x="324" y="432" width="1" height="2" fill="#fff"/>
<rect x="325" y="431" width="7" height="3" fill="#fff"/>
<rect x="332" y="432" width="1" height="2" fill="#fff"/>
<rect x="333" y="431" width="3" height="3" fill="#fff"/>
<rect x="336" y="432" width="1" height="2" fill="#fff"/>
<rect x="337" y="387" width="1" height="47" fill="#fff"/>
<rect x="338" y="338" width="1" height="96" fill="#fff"/>
<rect x="339" y="334" width="1" height="100" fill="#fff"/>
<rect x="340" y="330" width="1" height="104" fill="#fff"/>
<rect x="341" y="317" width="1" height="117" fill="#fff"/>
<rect x="342" y="297" width="2" height="137" fill="#fff"/>
<rect x="344" y="300" width="1" height="134" fill="#fff"/>
<rect x="345" y="303" width="1" height="131" fill="#fff"/>
<rect x="346" y="307" width="1" height="127" fill="#fff"/>
<rect x="347" y="313" width="1" height="121" fill="#fff"/>
<rect x="348" y="318" width="1" height="116" fill="#fff"/>
<rect x="349" y="320" width="1" height="114" fill="#fff"/>
<rect x="350" y="297" width="1" height="137" fill="#fff"/>
<rect x="351" y="432" width="2" height="2" fill="#fff"/>
<rect x="353" y="431" width="5" height="3" fill="#fff"/>
<rect x="358" y="432" width="1" height="2" fill="#fff"/>
<rect x="359" y="431" width="1" height="3" fill="#fff"/>
<rect x="360" y="432" width="3" height="2" fill="#fff"/>
<rect x="363" y="431" width="6" height="3" fill="#fff"/>
<rect x="369" y="432" width="1" height="2" fill="#fff"/>
<rect x="370" y="431" width="4" height="3" fill="#fff"/>
<rect x="374" y="432" width="1" height="2" fill="#fff"/>
<rect x="375" y="431" width="7" height="3" fill="#fff"/>
<rect x="382" y="432" width="1" height="2" fill="#fff"/>
<rect x="383" y="431" width="2" height="3" fill="#fff"/>
<rect x="385" y="432" width="1" height="2" fill="#fff"/>
<rect x="386" y="431" width="1" height="3" fill="#fff"/>
<rect x="387" y="432" width="1" height="2" fill="#fff"/>
<rect x="388" y="431" width="1" height="3" fill="#fff"/>
<rect x="389" y="432" width="1" height="2" fill="#fff"/>
<rect x="390" y="431" width="2" height="3" fill="#fff"/>
<rect x="392" y="432" width="1" height="2" fill="#fff"/>
<rect x="393" y="431" width="15" height="3" fill="#fff"/>
<rect x="408" y="432" width="2" height="2" fill="#fff"/>
<rect x="410" y="431" width="8" height="3" fill="#fff"/>
<rect x="418" y="432" width="1" height="2" fill="#fff"/>
<rect x="419" y="431" width="5" height="3" fill="#fff"/>
<rect x="424" y="432" width="2" height="2" fill="#fff"/>
<rect x="426" y="431" width="3" height="3" fill="#fff"/>
<rect x="429" y="432" width="1" height="2" fill="#fff"/>
<rect x="430" y="383" width="1" height="51" fill="#fff"/>
<rect x="431" y="334" width="1" height="100" fill="#fff"/>
<rect x="432" y="303" width="1" height="131" fill="#fff"/>
<rect x="433" y="273" width="1" height="161" fill="#fff"/>
<rect x="434" y="271" width="1" height="163" fill="#fff"/>
<rect x="435" y="275" width="1" height="159" fill="#fff"/>
<rect x="436" y="272" width="3" height="162" fill="#fff"/>
<rect x="439" y="275" width="2" height="159" fill="#fff"/>
<rect x="441" y="274" width="1" height="160" fill="#fff"/>
<rect x="442" y="273" width="3" height="161" fill="#fff"/>
<rect x="445" y="352" width="1" height="82" fill="#fff"/>
<rect x="446" y="431" width="15" height="3" fill="#fff"/>
<rect x="461" y="432" width="1" height="2" fill="#fff"/>
<rect x="462" y="431" width="8" height="3" fill="#fff"/>
<rect x="470" y="432" width="1" height="2" fill="#fff"/>
<rect x="471" y="431" width="13" height="3" fill="#fff"/>
<rect x="484" y="432" width="1" height="2" fill="#fff"/>
<rect x="485" y="431" width="1" height="3" fill="#fff"/>
<rect x="486" y="432" width="1" height="2" fill="#fff"/>
<rect x="487" y="431" width="17" height="3" fill="#fff"/>
<rect x="504" y="432" width="1" height="2" fill="#fff"/>
<rect x="505" y="431" width="2" height="3" fill="#fff"/>
<rect x="507" y="432" width="2" height="2" fill="#fff"/>
<rect x="509" y="431" width="6" height="3" fill="#fff"/>
<rect x="515" y="432" width="1" height="2" fill="#fff"/>
<rect x="516" y="431" width="2" height="3" fill="#fff"/>
<rect x="518" y="432" width="2" height="2" fill="#fff"/>
<rect x="520" y="431" width="2" height="3" fill="#fff"/>
<rect x="522" y="344" width="1" height="90" fill="#fff"/>
<rect x="523" y="340" width="1" height="94" fill="#fff"/>
<rect x="524" y="338" width="1" height="96" fill="#fff"/>
<rect x="525" y="333" width="1" height="101" fill="#fff"/>
<rect x="526" y="330" width="1" height="104" fill="#fff"/>
<rect x="527" y="307" width="1" height="127" fill="#fff"/>
<rect x="528" y="300" width="1" height="134" fill="#fff"/>
<rect x="529" y="303" width="1" height="131" fill="#fff"/>
<rect x="530" y="311" width="1" height="123" fill="#fff"/>
<rect x="531" y="315" width="1" height="119" fill="#fff"/>
<rect x="532" y="317" width="1" height="117" fill="#fff"/>
<rect x="533" y="320" width="1" height="114" fill="#fff"/>
<rect x="534" y="334" width="1" height="100" fill="#fff"/>
<rect x="535" y="318" width="1" height="116" fill="#fff"/>
<rect x="536" y="374" width="1" height="60" fill="#fff"/>
<rect x="537" y="432" width="6" height="2" fill="#fff"/>
<rect x="543" y="431" width="1" height="3" fill="#fff"/>
<rect x="544" y="432" width="1" height="2" fill="#fff"/>
<rect x="545" y="431" width="2" height="3" fill="#fff"/>
<rect x="547" y="432" width="1" height="2" fill="#fff"/>
<rect x="548" y="431" width="7" height="3" fill="#fff"/>
<rect x="555" y="432" width="1" height="2" fill="#fff"/>
<rect x="556" y="431" width="8" height="3" fill="#fff"/>
<rect x="564" y="432" width="1" height="2" fill="#fff"/>
<rect x="565" y="431" width="1" height="3" fill="#fff"/>
<rect x="566" y="432" width="1" height="2" fill="#fff"/>
<rect x="567" y="431" width="3" height="3" fill="#fff"/>
<rect x="570" y="432" width="1" height="2" fill="#fff"/>
<rect x="571" y="431" width="4" height="3" fill="#fff"/>
<rect x="575" y="432" width="1" height="2" fill="#fff"/>
<rect x="576" y="431" width="8" height="3" fill="#fff"/>
<rect x="584" y="432" width="1" height="2" fill="#fff"/>
<rect x="585" y="431" width="1" height="3" fill="#fff"/>
<rect x="586" y="432" width="1" height="2" fill="#fff"/>
<rect x="587" y="431" width="3" height="3" fill="#fff"/>
<rect x="590" y="432" width="1" height="2" fill="#fff"/>
<rect x="591" y="431" width="1" height="3" fill="#fff"/>
<rect x="592" y="432" width="1" height="2" fill="#fff"/>
<rect x="593" y="431" width="10" height="3" fill="#fff"/>
<rect x="603" y="432" width="2" height="2" fill="#fff"/>
<rect x="605" y="431" width="7" height="3" fill="#fff"/>
<rect x="612" y="432" width="1" height="2" fill="#fff"/>
<rect x="613" y="403" width="1" height="31" fill="#fff"/>
<rect x="614" y="370" width="1" height="64" fill="#fff"/>
<rect x="615" y="403" width="1" height="31" fill="#fff"/>
<rect x="616" y="334" width="1" height="100" fill="#fff"/>
<rect x="617" y="333" width="1" height="101" fill="#fff"/>
<rect x="618" y="273" width="1" height="161" fill="#fff"/>
<rect x="619" y="271" width="1" height="163" fill="#fff"/>
<rect x="620" y="270" width="2" height="164" fill="#fff"/>
<rect x="622" y="271" width="1" height="163" fill="#fff"/>
<rect x="623" y="274" width="1" height="160" fill="#fff"/>
<rect x="624" y="272" width="1" height="162" fill="#fff"/>
<rect x="625" y="273" width="1" height="161" fill="#fff"/>
<rect x="626" y="270" width="1" height="164" fill="#fff"/>
<rect x="627" y="272" width="3" height="162" fill="#fff"/>
<rect x="630" y="429" width="6" height="5" fill="#fff"/>
<rect x="636" y="431" width="1" height="3" fill="#fff"/>
<rect x="637" y="432" width="1" height="2" fill="#fff"/>
<rect x="638" y="431" width="3" height="3" fill="#fff"/>
<rect x="641" y="432" width="1" height="2" fill="#fff"/>
<rect x="642" y="431" width="3" height="3" fill="#fff"/>
<rect x="645" y="432" width="1" height="2" fill="#fff"/>
<rect x="646" y="431" width="7" height="3" fill="#fff"/>
<rect x="653" y="432" width="1" height="2" fill="#fff"/>
<rect x="654" y="431" width="8" height="3" fill="#fff"/>
<rect x="662" y="432" width="1" height="2" fill="#fff"/>
<rect x="663" y="431" width="1" height="3" fill="#fff"/>
<rect x="664" y="432" width="1" height="2" fill="#fff"/>
<rect x="665" y="431" width="1" height="3" fill="#fff"/>
<rect x="666" y="432" width="1" height="2" fill="#fff"/>
<rect x="667" y="431" width="9" height="3" fill="#fff"/>
<rect x="676" y="432" width="1" height="2" fill="#fff"/>
<rect x="677" y="431" width="1" height="3" fill="#fff"/>
<rect x="678" y="432" width="1" height="2" fill="#fff"/>
<rect x="679" y="431" width="7" height="3" fill="#fff"/>
<rect x="686" y="432" width="1" height="2" fill="#fff"/>
<rect x="687" y="431" width="3" height="3" fill="#fff"/>
<rect x="690" y="432" width="1" height="2" fill="#fff"/>
<rect x="691" y="431" width="5" height="3" fill="#fff"/>
<rect x="696" y="432" width="1" height="2" fill="#fff"/>
<rect x="697" y="431" width="1" height="3" fill="#fff"/>
<rect x="698" y="432" width="1" height="2" fill="#fff"/>
<rect x="699" y="431" width="8" height="3" fill="#fff"/>
<rect x="707" y="374" width="1" height="60" fill="#fff"/>
<rect x="708" y="340" width="1" height="94" fill="#fff"/>
<rect x="709" y="338" width="1" height="96" fill="#fff"/>
<rect x="710" y="339" width="1" height="95" fill="#fff"/>
<rect x="711" y="337" width="1" height="97" fill="#fff"/>
<rect x="712" y="303" width="1" height="131" fill="#fff"/>
<rect x="713" y="304" width="1" height="130" fill="#fff"/>
<rect x="714" y="308" width="1" height="126" fill="#fff"/>
<rect x="715" y="306" width="1" height="128" fill="#fff"/>
<rect x="716" y="305" width="1" height="129" fill="#fff"/>
<rect x="717" y="308" width="2" height="126" fill="#fff"/>
<rect x="719" y="304" width="1" height="130" fill="#fff"/>
<rect x="720" y="370" width="2" height="64" fill="#fff"/>
<rect x="722" y="431" width="23" height="3" fill="#fff"/>
<rect x="745" y="432" width="1" height="2" fill="#fff"/>
<rect x="746" y="431" width="1" height="3" fill="#fff"/>
<rect x="747" y="432" width="3" height="2" fill="#fff"/>
<rect x="750" y="431" width="3" height="3" fill="#fff"/>
<rect x="753" y="432" width="1" height="2" fill="#fff"/>
<rect x="754" y="431" width="4" height="3" fill="#fff"/>
<rect x="758" y="432" width="1" height="2" fill="#fff"/>
<rect x="759" y="431" width="5" height="3" fill="#fff"/>
<rect x="764" y="432" width="1" height="2" fill="#fff"/>
<rect x="765" y="431" width="2" height="3" fill="#fff"/>
<rect x="767" y="432" width="1" height="2" fill="#fff"/>
<rect x="768" y="431" width="12" height="3" fill="#fff"/>
<rect x="780" y="432" width="2" height="2" fill="#fff"/>
<rect x="782" y="431" width="7" height="3" fill="#fff"/>
<rect x="789" y="432" width="1" height="2" fill="#fff"/>
<rect x="790" y="431" width="2" height="3" fill="#fff"/>
<rect x="792" y="432" width="1" height="2" fill="#fff"/>
<rect x="793" y="431" width="6" height="3" fill="#fff"/>
<rect x="799" y="432" width="1" height="2" fill="#fff"/>
<rect x="800" y="431" width="1" height="3" fill="#fff"/>
<rect x="801" y="375" width="1" height="59" fill="#fff"/>
<rect x="802" y="333" width="1" height="101" fill="#fff"/>
<rect x="803" y="274" width="1" height="160" fill="#fff"/>
<rect x="804" y="273" width="3" height="161" fill="#fff"/>
<rect x="807" y="272" width="1" height="162" fill="#fff"/>
<rect x="808" y="277" width="1" height="157" fill="#fff"/>
<rect x="809" y="273" width="1" height="161" fill="#fff"/>
<rect x="810" y="275" width="1" height="159" fill="#fff"/>
<rect x="811" y="277" width="1" height="157" fill="#fff"/>
<rect x="812" y="276" width="1" height="158" fill="#fff"/>
<rect x="813" y="271" width="2" height="163" fill="#fff"/>
<rect x="815" y="351" width="2" height="83" fill="#fff"/>
<rect x="817" y="431" width="1" height="3" fill="#fff"/>
<rect x="818" y="267" width="1" height="168" fill="#e6e6e6"/>
<rect x="77" y="434" width="741" height="1" fill="#e2e2e2"/>
<rect x="70" y="268" width="5" height="1" fill="#000"/>
<text x="67.5" y="272.5" font-family="'Liberation Sans', sans-serif" stroke="#000" stroke-width="0.2" font-size="10.5" text-anchor="end" textLength="23.4" lengthAdjust="spacingAndGlyphs">2000</text>
<rect x="70" y="289" width="5" height="1" fill="#000"/>
<text x="67.5" y="293.5" font-family="'Liberation Sans', sans-serif" stroke="#000" stroke-width="0.2" font-size="10.5" text-anchor="end" textLength="23.4" lengthAdjust="spacingAndGlyphs">1750</text>
<rect x="70" y="309" width="5" height="1" fill="#000"/>
<text x="67.5" y="313.5" font-family="'Liberation Sans', sans-serif" stroke="#000" stroke-width="0.2" font-size="10.5" text-anchor="end" textLength="23.4" lengthAdjust="spacingAndGlyphs">1500</text>
<rect x="70" y="330" width="5" height="1" fill="#000"/>
<text x="67.5" y="334.5" font-family="'Liberation Sans', sans-serif" stroke="#000" stroke-width="0.2" font-size="10.5" text-anchor="end" textLength="23.4" lengthAdjust="spacingAndGlyphs">1250</text>
<rect x="70" y="351" width="5" height="1" fill="#000"/>
<text x="67.5" y="355.5" font-family="'Liberation Sans', sans-serif" stroke="#000" stroke-width="0.2" font-size="10.5" text-anchor="end" textLength="23.4" lengthAdjust="spacingAndGlyphs">1000</text>
<rect x="70" y="371" width="5" height="1" fill="#000"/>
<text x="67.5" y="375.5" font-family="'Liberation Sans', sans-serif" stroke="#000" stroke-width="0.2" font-size="10.5" text-anchor="end" textLength="17.55" lengthAdjust="spacingAndGlyphs">750</text>
<rect x="70" y="392" width="5" height="1" fill="#000"/>
<text x="67.5" y="396.5" font-family="'Liberation Sans', sans-serif" stroke="#000" stroke-width="0.2" font-size="10.5" text-anchor="end" textLength="17.55" lengthAdjust="spacingAndGlyphs">500</text>
<rect x="70" y="412" width="5" height="1" fill="#000"/>
<text x="67.5" y="416.5" font-family="'Liberation Sans', sans-serif" stroke="#000" stroke-width="0.2" font-size="10.5" text-anchor="end" textLength="17.55" lengthAdjust="spacingAndGlyphs">250</text>
<rect x="70" y="433" width="5" height="1" fill="#000"/>
<text x="67.5" y="437.5" font-family="'Liberation Sans', sans-serif" stroke="#000" stroke-width="0.2" font-size="10.5" text-anchor="end" textLength="5.85" lengthAdjust="spacingAndGlyphs">0</text>
<rect x="85" y="436" width="1" height="3" fill="#000"/>
<rect x="93" y="436" width="1" height="3" fill="#000"/>
<rect x="100" y="436" width="1" height="3" fill="#000"/>
<rect x="108" y="436" width="1" height="3" fill="#000"/>
<rect x="115" y="436" width="1" height="3" fill="#000"/>
<rect x="122" y="436" width="1" height="3" fill="#000"/>
<rect x="130" y="436" width="1" height="3" fill="#000"/>
<rect x="137" y="436" width="1" height="3" fill="#000"/>
<rect x="145" y="436" width="1" height="3" fill="#000"/>
<rect x="152" y="436" width="1" height="3" fill="#000"/>
<rect x="159" y="436" width="1" height="3" fill="#000"/>
<rect x="167" y="436" width="1" height="3" fill="#000"/>
<rect x="174" y="436" width="1" height="3" fill="#000"/>
<rect x="182" y="436" width="1" height="3" fill="#000"/>
<rect x="189" y="436" width="1" height="3" fill="#000"/>
<rect x="196" y="436" width="1" height="3" fill="#000"/>
<rect x="204" y="436" width="1" height="3" fill="#000"/>
<rect x="211" y="436" width="1" height="3" fill="#000"/>
<rect x="219" y="436" width="1" height="3" fill="#000"/>
<rect x="226" y="436" width="1" height="3" fill="#000"/>
<rect x="233" y="436" width="1" height="3" fill="#000"/>
<rect x="241" y="436" width="1" height="3" fill="#000"/>
<rect x="248" y="436" width="1" height="3" fill="#000"/>
<rect x="256" y="436" width="1" height="3" fill="#000"/>
<rect x="263" y="436" width="1" height="3" fill="#000"/>
<rect x="270" y="436" width="1" height="3" fill="#000"/>
<rect x="278" y="436" width="1" height="3" fill="#000"/>
<rect x="285" y="436" width="1" height="3" fill="#000"/>
<rect x="293" y="436" width="1" height="3" fill="#000"/>
<rect x="300" y="436" width="1" height="3" fill="#000"/>
<rect x="307" y="436" width="1" height="3" fill="#000"/>
<rect x="315" y="436" width="1" height="3" fill="#000"/>
<rect x="322" y="436" width="1" height="3" fill="#000"/>
<rect x="330" y="436" width="1" height="3" fill="#000"/>
<rect x="337" y="436" width="1" height="3" fill="#000"/>
<rect x="344" y="436" width="1" height="3" fill="#000"/>
<rect x="352" y="436" width="1" height="3" fill="#000"/>
<rect x="359" y="436" width="1" height="3" fill="#000"/>
<rect x="367" y="436" width="1" height="3" fill="#000"/>
<rect x="374" y="436" width="1" height="3" fill="#000"/>
<rect x="381" y="436" width="1" height="3" fill="#000"/>
<rect x="389" y="436" width="1" height="3" fill="#000"/>
<rect x="396" y="436" width="1" height="3" fill="#000"/>
<rect x="404" y="436" width="1" height="3" fill="#000"/>
<rect x="411" y="436" width="1" height="3" fill="#000"/>
<rect x="418" y="436" width="1" height="3" fill="#000"/>
<rect x="426" y="436" width="1" height="3" fill="#000"/>
<rect x="433" y="436" width="1" height="3" fill="#000"/>
<rect x="441" y="436" width="1" height="3" fill="#000"/>
<rect x="448" y="436" width="1" height="3" fill="#000"/>
<rect x="455" y="436" width="1" height="3" fill="#000"/>
<rect x="463" y="436" width="1" height="3" fill="#000"/>
<rect x="470" y="436" width="1" height="3" fill="#000"/>
<rect x="478" y="436" width="1" height="3" fill="#000"/>
<rect x="485" y="436" width="1" height="3" fill="#000"/>
<rect x="492" y="436" width="1" height="3" fill="#000"/>
<rect x="500" y="436" width="1" height="3" fill="#000"/>
<rect x="507" y="436" width="1" height="3" fill="#000"/>
<rect x="515" y="436" width="1" height="3" fill="#000"/>
<rect x="522" y="436" width="1" height="3" fill="#000"/>
<rect x="530" y="436" width="1" height="3" fill="#000"/>
<rect x="537" y="436" width="1" height="3" fill="#000"/>
<rect x="544" y="436" width="1" height="3" fill="#000"/>
<rect x="552" y="436" width="1" height="3" fill="#000"/>
<rect x="559" y="436" width="1" height="3" fill="#000"/>
<rect x="567" y="436" width="1" height="3" fill="#000"/>
<rect x="574" y="436" width="1" height="3" fill="#000"/>
<rect x="581" y="436" width="1" height="3" fill="#000"/>
<rect x="589" y="436" width="1" height="3" fill="#000"/>
<rect x="596" y="436" width="1" height="3" fill="#000"/>
<rect x="604" y="436" width="1" height="3" fill="#000"/>
<rect x="611" y="436" width="1" height="3" fill="#000"/>
<rect x="618" y="436" width="1" height="3" fill="#000"/>
<rect x="626" y="436" width="1" height="3" fill="#000"/>
<rect x="633" y="436" width="1" height="3" fill="#000"/>
<rect x="641" y="436" width="1" height="3" fill="#000"/>
<rect x="648" y="436" width="1" height="3" fill="#000"/>
<rect x="655" y="436" width="1" height="3" fill="#000"/>
<rect x="663" y="436" width="1" height="3" fill="#000"/>
<rect x="670" y="436" width="1" height="3" fill="#000"/>
<rect x="678" y="436" width="1" height="3" fill="#000"/>
<rect x="685" y="436" width="1" height="3" fill="#000"/>
<rect x="692" y="436" width="1" height="3" fill="#000"/>
<rect x="700" y="436" width="1" height="3" fill="#000"/>
<rect x="707" y="436" width="1" height="3" fill="#000"/>
<rect x="715" y="436" width="1" height="3" fill="#000"/>
<rect x="722" y="436" width="1" height="3" fill="#000"/>
<rect x="729" y="436" width="1" height="3" fill="#000"/>
<rect x="737" y="436" width="1" height="3" fill="#000"/>
<rect x="744" y="436" width="1" height="3" fill="#000"/>
<rect x="752" y="436" width="1" height="3" fill="#000"/>
<rect x="759" y="436" width="1" height="3" fill="#000"/>
<rect x="766" y="436" width="1" height="3" fill="#000"/>
<rect x="774" y="436" width="1" height="3" fill="#000"/>
<rect x="781" y="436" width="1" height="3" fill="#000"/>
<rect x="789" y="436" width="1" height="3" fill="#000"/>
<rect x="796" y="436" width="1" height="3" fill="#000"/>
<rect x="803" y="436" width="1" height="3" fill="#000"/>
<rect x="811" y="436" width="1" height="3" fill="#000"/>
<rect x="93" y="436" width="1" height="5" fill="#000"/>
<rect x="130" y="436" width="1" height="5" fill="#000"/>
<rect x="167" y="436" width="1" height="5" fill="#000"/>
<rect x="204" y="436" width="1" height="5" fill="#000"/>
<rect x="241" y="436" width="1" height="5" fill="#000"/>
<rect x="278" y="436" width="1" height="5" fill="#000"/>
<rect x="315" y="436" width="1" height="5" fill="#000"/>
<rect x="352" y="436" width="1" height="5" fill="#000"/>
<rect x="389" y="436" width="1" height="5" fill="#000"/>
<rect x="426" y="436" width="1" height="5" fill="#000"/>
<rect x="463" y="436" width="1" height="5" fill="#000"/>
<rect x="500" y="436" width="1" height="5" fill="#000"/>
<rect x="537" y="436" width="1" height="5" fill="#000"/>
<rect x="574" y="436" width="1" height="5" fill="#000"/>
<rect x="611" y="436" width="1" height="5" fill="#000"/>
<rect x="648" y="436" width="1" height="5" fill="#000"/>
<rect x="685" y="436" width="1" height="5" fill="#000"/>
<rect x="722" y="436" width="1" height="5" fill="#000"/>
<rect x="759" y="436" width="1" height="5" fill="#000"/>
<rect x="796" y="436" width="1" height="5" fill="#000"/>
<text x="77.5" y="453" font-family="'Liberation Sans', sans-serif" stroke="#000" stroke-width="0.2" font-size="10.5" text-anchor="middle" textLength="23.4" lengthAdjust="spacingAndGlyphs">1506</text>
<text x="129.8" y="453" font-family="'Liberation Sans', sans-serif" stroke="#000" stroke-width="0.2" font-size="10.5" text-anchor="middle" textLength="23.4" lengthAdjust="spacingAndGlyphs">1520</text>
<text x="166.81" y="453" font-family="'Liberation Sans', sans-serif" stroke="#000" stroke-width="0.2" font-size="10.5" text-anchor="middle" textLength="23.4" lengthAdjust="spacingAndGlyphs">1530</text>
<text x="203.82" y="453" font-family="'Liberation Sans', sans-serif" stroke="#000" stroke-width="0.2" font-size="10.5" text-anchor="middle" textLength="23.4" lengthAdjust="spacingAndGlyphs">1540</text>
<text x="240.83" y="453" font-family="'Liberation Sans', sans-serif" stroke="#000" stroke-width="0.2" font-size="10.5" text-anchor="middle" textLength="23.4" lengthAdjust="spacingAndGlyphs">1550</text>
<text x="277.84" y="453" font-family="'Liberation Sans', sans-serif" stroke="#000" stroke-width="0.2" font-size="10.5" text-anchor="middle" textLength="23.4" lengthAdjust="spacingAndGlyphs">1560</text>
<text x="314.85" y="453" font-family="'Liberation Sans', sans-serif" stroke="#000" stroke-width="0.2" font-size="10.5" text-anchor="middle" textLength="23.4" lengthAdjust="spacingAndGlyphs">1570</text>
<text x="351.86" y="453" font-family="'Liberation Sans', sans-serif" stroke="#000" stroke-width="0.2" font-size="10.5" text-anchor="middle" textLength="23.4" lengthAdjust="spacingAndGlyphs">1580</text>
<text x="388.87" y="453" font-family="'Liberation Sans', sans-serif" stroke="#000" stroke-width="0.2" font-size="10.5" text-anchor="middle" textLength="23.4" lengthAdjust="spacingAndGlyphs">1590</text>
<text x="425.88" y="453" font-family="'Liberation Sans', sans-serif" stroke="#000" stroke-width="0.2" font-size="10.5" text-anchor="middle" textLength="23.4" lengthAdjust="spacingAndGlyphs">1600</text>
<text x="462.89" y="453" font-family="'Liberation Sans', sans-serif" stroke="#000" stroke-width="0.2" font-size="10.5" text-anchor="middle" textLength="23.4" lengthAdjust="spacingAndGlyphs">1610</text>
<text x="499.9" y="453" font-family="'Liberation Sans', sans-serif" stroke="#000" stroke-width="0.2" font-size="10.5" text-anchor="middle" textLength="23.4" lengthAdjust="spacingAndGlyphs">1620</text>
<text x="536.91" y="453" font-family="'Liberation Sans', sans-serif" stroke="#000" stroke-width="0.2" font-size="10.5" text-anchor="middle" textLength="23.4" lengthAdjust="spacingAndGlyphs">1630</text>
<text x="573.92" y="453" font-family="'Liberation Sans', sans-serif" stroke="#000" stroke-width="0.2" font-size="10.5" text-anchor="middle" textLength="23.4" lengthAdjust="spacingAndGlyphs">1640</text>
<text x="610.93" y="453" font-family="'Liberation Sans', sans-serif" stroke="#000" stroke-width="0.2" font-size="10.5" text-anchor="middle" textLength="23.4" lengthAdjust="spacingAndGlyphs">1650</text>
<text x="647.94" y="453" font-family="'Liberation Sans', sans-serif" stroke="#000" stroke-width="0.2" font-size="10.5" text-anchor="middle" textLength="23.4" lengthAdjust="spacingAndGlyphs">1660</text>
<text x="684.95" y="453" font-family="'Liberation Sans', sans-serif" stroke="#000" stroke-width="0.2" font-size="10.5" text-anchor="middle" textLength="23.4" lengthAdjust="spacingAndGlyphs">1670</text>
<text x="721.96" y="453" font-family="'Liberation Sans', sans-serif" stroke="#000" stroke-width="0.2" font-size="10.5" text-anchor="middle" textLength="23.4" lengthAdjust="spacingAndGlyphs">1680</text>
<text x="758.97" y="453" font-family="'Liberation Sans', sans-serif" stroke="#000" stroke-width="0.2" font-size="10.5" text-anchor="middle" textLength="23.4" lengthAdjust="spacingAndGlyphs">1690</text>
<text x="816" y="453" font-family="'Liberation Sans', sans-serif" stroke="#000" stroke-width="0.2" font-size="10.5" text-anchor="middle" textLength="23.4" lengthAdjust="spacingAndGlyphs">1706</text>
<rect x="77" y="436" width="1" height="5" fill="#000"/>
<rect x="817" y="436" width="1" height="5" fill="#000"/>
<text x="446.7" y="469" font-family="'Liberation Mono', monospace" stroke="#000" stroke-width="0.25" font-size="11" text-anchor="middle" textLength="23.5" lengthAdjust="spacingAndGlyphs">Time</text>
<text transform="translate(37.6,350.7) rotate(-90)" font-family="'Liberation Mono', monospace" stroke="#000" stroke-width="0.25" font-size="11" text-anchor="middle" textLength="53" lengthAdjust="spacingAndGlyphs">Amplitude</text>
<rect x="91" y="496" width="727" height="166" fill="#000"/>
<rect x="91" y="634" width="727" height="1" fill="#9a9a58"/>
<rect x="91" y="606" width="727" height="1" fill="#9a9a58"/>
<rect x="91" y="579" width="727" height="1" fill="#9a9a58"/>
<rect x="91" y="551" width="727" height="1" fill="#9a9a58"/>
<rect x="91" y="524" width="727" height="1" fill="#9a9a58"/>
<rect x="91" y="660" width="727" height="1" fill="#fff"/>
<polyline points="161.5,660.5 161.5,634 162.5,618 163,611 164,608 165,607.5 165.5,615 166.5,610 167,605 168,613 169,613.5 170,623 171,627 172,634.5 173,639 174,643 175,652 175.5,660.5" fill="none" stroke="#fff" stroke-width="1"/>
<polyline points="254.5,660.5 254.5,646 255.5,627.6 256.5,572 256.8,546 257.5,542.4 258.5,546 259.5,550.7 260.5,558 262,561 263,564.6 264.5,569 266,570 267,572 267.5,640.5 268.5,655 269,660.5" fill="none" stroke="#fff" stroke-width="1"/>
<polyline points="343,660.5 344.4,627.7 345.6,594.8 346.4,586.8 348,590.8 349.3,577.9 351.5,595.8 353.9,603.8 355.5,613.7 356.5,621.7 357.3,612.8 357.9,660.5" fill="none" stroke="#fff" stroke-width="1"/>
<polyline points="435.7,660.5 437,638.7 438,600.8 439,550 440,547 441.7,556 444,563.9 445.6,569.9 447.6,573.9 449.2,575.5 449.6,638.7 450.6,660.5" fill="none" stroke="#fff" stroke-width="1"/>
<polyline points="526,660.5 526.4,631.7 528,605.8 528.5,592.8 529.3,589.8 530.5,591.8 532,588.8 533.5,595.8 535.5,609.8 538,625.7 539.5,631.7 541,660.5" fill="none" stroke="#fff" stroke-width="1"/>
<polyline points="617.7,660.5 619.3,638.7 620.3,619.7 621.3,548.9 622.7,547 624,543.6 625.3,550 627.6,560 629.6,566.9 631.2,568.9 631.6,633.7 633.2,657.6 634,660.5" fill="none" stroke="#fff" stroke-width="1"/>
<polyline points="708.9,660.5 709.3,611.8 710.3,591.8 711.3,587.8 712.9,591.8 714.3,587.4 716.9,597.8 718.9,613.8 720.9,625.7 722.3,629.7 722.5,660.5" fill="none" stroke="#fff" stroke-width="1"/>
<polyline points="800.7,660.5 801.7,649.7 802.7,615.8 803.7,571.9 804.5,549.9 806.7,556.9 809.3,560.9 811.7,569.9 813.7,573.9 814.6,577.9 814.6,658.6 817.2,660.5" fill="none" stroke="#fff" stroke-width="1"/>
<rect x="818" y="496" width="1" height="167" fill="#e6e6e6"/>
<rect x="91" y="662" width="727" height="1" fill="#e2e2e2"/>
<rect x="85" y="496" width="5" height="1" fill="#000"/>
<text x="82.5" y="500.5" font-family="'Liberation Sans', sans-serif" stroke="#000" stroke-width="0.2" font-size="10.5" text-anchor="end" textLength="35.1" lengthAdjust="spacingAndGlyphs">300000</text>
<rect x="85" y="524" width="5" height="1" fill="#000"/>
<text x="82.5" y="528.5" font-family="'Liberation Sans', sans-serif" stroke="#000" stroke-width="0.2" font-size="10.5" text-anchor="end" textLength="35.1" lengthAdjust="spacingAndGlyphs">250000</text>
<rect x="85" y="551" width="5" height="1" fill="#000"/>
<text x="82.5" y="555.5" font-family="'Liberation Sans', sans-serif" stroke="#000" stroke-width="0.2" font-size="10.5" text-anchor="end" textLength="35.1" lengthAdjust="spacingAndGlyphs">200000</text>
<rect x="85" y="579" width="5" height="1" fill="#000"/>
<text x="82.5" y="583.5" font-family="'Liberation Sans', sans-serif" stroke="#000" stroke-width="0.2" font-size="10.5" text-anchor="end" textLength="35.1" lengthAdjust="spacingAndGlyphs">150000</text>
<rect x="85" y="606" width="5" height="1" fill="#000"/>
<text x="82.5" y="610.5" font-family="'Liberation Sans', sans-serif" stroke="#000" stroke-width="0.2" font-size="10.5" text-anchor="end" textLength="35.1" lengthAdjust="spacingAndGlyphs">100000</text>
<rect x="85" y="634" width="5" height="1" fill="#000"/>
<text x="82.5" y="638.5" font-family="'Liberation Sans', sans-serif" stroke="#000" stroke-width="0.2" font-size="10.5" text-anchor="end" textLength="29.25" lengthAdjust="spacingAndGlyphs">50000</text>
<rect x="85" y="661" width="5" height="1" fill="#000"/>
<text x="82.5" y="665.5" font-family="'Liberation Sans', sans-serif" stroke="#000" stroke-width="0.2" font-size="10.5" text-anchor="end" textLength="5.85" lengthAdjust="spacingAndGlyphs">0</text>
<rect x="97" y="664" width="1" height="3" fill="#000"/>
<rect x="105" y="664" width="1" height="3" fill="#000"/>
<rect x="112" y="664" width="1" height="3" fill="#000"/>
<rect x="119" y="664" width="1" height="3" fill="#000"/>
<rect x="126" y="664" width="1" height="3" fill="#000"/>
<rect x="134" y="664" width="1" height="3" fill="#000"/>
<rect x="141" y="664" width="1" height="3" fill="#000"/>
<rect x="148" y="664" width="1" height="3" fill="#000"/>
<rect x="155" y="664" width="1" height="3" fill="#000"/>
<rect x="163" y="664" width="1" height="3" fill="#000"/>
<rect x="170" y="664" width="1" height="3" fill="#000"/>
<rect x="177" y="664" width="1" height="3" fill="#000"/>
<rect x="185" y="664" width="1" height="3" fill="#000"/>
<rect x="192" y="664" width="1" height="3" fill="#000"/>
<rect x="199" y="664" width="1" height="3" fill="#000"/>
<rect x="206" y="664" width="1" height="3" fill="#000"/>
<rect x="214" y="664" width="1" height="3" fill="#000"/>
<rect x="221" y="664" width="1" height="3" fill="#000"/>
<rect x="228" y="664" width="1" height="3" fill="#000"/>
<rect x="235" y="664" width="1" height="3" fill="#000"/>
<rect x="243" y="664" width="1" height="3" fill="#000"/>
<rect x="250" y="664" width="1" height="3" fill="#000"/>
<rect x="257" y="664" width="1" height="3" fill="#000"/>
<rect x="264" y="664" width="1" height="3" fill="#000"/>
<rect x="272" y="664" width="1" height="3" fill="#000"/>
<rect x="279" y="664" width="1" height="3" fill="#000"/>
<rect x="286" y="664" width="1" height="3" fill="#000"/>
<rect x="293" y="664" width="1" height="3" fill="#000"/>
<rect x="301" y="664" width="1" height="3" fill="#000"/>
<rect x="308" y="664" width="1" height="3" fill="#000"/>
<rect x="315" y="664" width="1" height="3" fill="#000"/>
<rect x="322" y="664" width="1" height="3" fill="#000"/>
<rect x="330" y="664" width="1" height="3" fill="#000"/>
<rect x="337" y="664" width="1" height="3" fill="#000"/>
<rect x="344" y="664" width="1" height="3" fill="#000"/>
<rect x="351" y="664" width="1" height="3" fill="#000"/>
<rect x="359" y="664" width="1" height="3" fill="#000"/>
<rect x="366" y="664" width="1" height="3" fill="#000"/>
<rect x="373" y="664" width="1" height="3" fill="#000"/>
<rect x="380" y="664" width="1" height="3" fill="#000"/>
<rect x="388" y="664" width="1" height="3" fill="#000"/>
<rect x="395" y="664" width="1" height="3" fill="#000"/>
<rect x="402" y="664" width="1" height="3" fill="#000"/>
<rect x="409" y="664" width="1" height="3" fill="#000"/>
<rect x="417" y="664" width="1" height="3" fill="#000"/>
<rect x="424" y="664" width="1" height="3" fill="#000"/>
<rect x="431" y="664" width="1" height="3" fill="#000"/>
<rect x="438" y="664" width="1" height="3" fill="#000"/>
<rect x="446" y="664" width="1" height="3" fill="#000"/>
<rect x="453" y="664" width="1" height="3" fill="#000"/>
<rect x="460" y="664" width="1" height="3" fill="#000"/>
<rect x="467" y="664" width="1" height="3" fill="#000"/>
<rect x="475" y="664" width="1" height="3" fill="#000"/>
<rect x="482" y="664" width="1" height="3" fill="#000"/>
<rect x="489" y="664" width="1" height="3" fill="#000"/>
<rect x="497" y="664" width="1" height="3" fill="#000"/>
<rect x="504" y="664" width="1" height="3" fill="#000"/>
<rect x="511" y="664" width="1" height="3" fill="#000"/>
<rect x="518" y="664" width="1" height="3" fill="#000"/>
<rect x="526" y="664" width="1" height="3" fill="#000"/>
<rect x="533" y="664" width="1" height="3" fill="#000"/>
<rect x="540" y="664" width="1" height="3" fill="#000"/>
<rect x="547" y="664" width="1" height="3" fill="#000"/>
<rect x="555" y="664" width="1" height="3" fill="#000"/>
<rect x="562" y="664" width="1" height="3" fill="#000"/>
<rect x="569" y="664" width="1" height="3" fill="#000"/>
<rect x="576" y="664" width="1" height="3" fill="#000"/>
<rect x="584" y="664" width="1" height="3" fill="#000"/>
<rect x="591" y="664" width="1" height="3" fill="#000"/>
<rect x="598" y="664" width="1" height="3" fill="#000"/>
<rect x="605" y="664" width="1" height="3" fill="#000"/>
<rect x="613" y="664" width="1" height="3" fill="#000"/>
<rect x="620" y="664" width="1" height="3" fill="#000"/>
<rect x="627" y="664" width="1" height="3" fill="#000"/>
<rect x="634" y="664" width="1" height="3" fill="#000"/>
<rect x="642" y="664" width="1" height="3" fill="#000"/>
<rect x="649" y="664" width="1" height="3" fill="#000"/>
<rect x="656" y="664" width="1" height="3" fill="#000"/>
<rect x="663" y="664" width="1" height="3" fill="#000"/>
<rect x="671" y="664" width="1" height="3" fill="#000"/>
<rect x="678" y="664" width="1" height="3" fill="#000"/>
<rect x="685" y="664" width="1" height="3" fill="#000"/>
<rect x="692" y="664" width="1" height="3" fill="#000"/>
<rect x="700" y="664" width="1" height="3" fill="#000"/>
<rect x="707" y="664" width="1" height="3" fill="#000"/>
<rect x="714" y="664" width="1" height="3" fill="#000"/>
<rect x="721" y="664" width="1" height="3" fill="#000"/>
<rect x="729" y="664" width="1" height="3" fill="#000"/>
<rect x="736" y="664" width="1" height="3" fill="#000"/>
<rect x="743" y="664" width="1" height="3" fill="#000"/>
<rect x="750" y="664" width="1" height="3" fill="#000"/>
<rect x="758" y="664" width="1" height="3" fill="#000"/>
<rect x="765" y="664" width="1" height="3" fill="#000"/>
<rect x="772" y="664" width="1" height="3" fill="#000"/>
<rect x="779" y="664" width="1" height="3" fill="#000"/>
<rect x="787" y="664" width="1" height="3" fill="#000"/>
<rect x="794" y="664" width="1" height="3" fill="#000"/>
<rect x="801" y="664" width="1" height="3" fill="#000"/>
<rect x="809" y="664" width="1" height="3" fill="#000"/>
<rect x="816" y="664" width="1" height="3" fill="#000"/>
<rect x="119" y="664" width="1" height="5" fill="#000"/>
<rect x="155" y="664" width="1" height="5" fill="#000"/>
<rect x="192" y="664" width="1" height="5" fill="#000"/>
<rect x="228" y="664" width="1" height="5" fill="#000"/>
<rect x="264" y="664" width="1" height="5" fill="#000"/>
<rect x="301" y="664" width="1" height="5" fill="#000"/>
<rect x="337" y="664" width="1" height="5" fill="#000"/>
<rect x="373" y="664" width="1" height="5" fill="#000"/>
<rect x="409" y="664" width="1" height="5" fill="#000"/>
<rect x="446" y="664" width="1" height="5" fill="#000"/>
<rect x="482" y="664" width="1" height="5" fill="#000"/>
<rect x="518" y="664" width="1" height="5" fill="#000"/>
<rect x="555" y="664" width="1" height="5" fill="#000"/>
<rect x="591" y="664" width="1" height="5" fill="#000"/>
<rect x="627" y="664" width="1" height="5" fill="#000"/>
<rect x="663" y="664" width="1" height="5" fill="#000"/>
<rect x="700" y="664" width="1" height="5" fill="#000"/>
<rect x="736" y="664" width="1" height="5" fill="#000"/>
<rect x="772" y="664" width="1" height="5" fill="#000"/>
<rect x="809" y="664" width="1" height="5" fill="#000"/>
<text x="91.5" y="681" font-family="'Liberation Sans', sans-serif" stroke="#000" stroke-width="0.2" font-size="10.5" text-anchor="middle" textLength="23.4" lengthAdjust="spacingAndGlyphs">1502</text>
<text x="119.1" y="681" font-family="'Liberation Sans', sans-serif" stroke="#000" stroke-width="0.2" font-size="10.5" text-anchor="middle" textLength="23.4" lengthAdjust="spacingAndGlyphs">1510</text>
<text x="155.38" y="681" font-family="'Liberation Sans', sans-serif" stroke="#000" stroke-width="0.2" font-size="10.5" text-anchor="middle" textLength="23.4" lengthAdjust="spacingAndGlyphs">1520</text>
<text x="191.66" y="681" font-family="'Liberation Sans', sans-serif" stroke="#000" stroke-width="0.2" font-size="10.5" text-anchor="middle" textLength="23.4" lengthAdjust="spacingAndGlyphs">1530</text>
<text x="227.94" y="681" font-family="'Liberation Sans', sans-serif" stroke="#000" stroke-width="0.2" font-size="10.5" text-anchor="middle" textLength="23.4" lengthAdjust="spacingAndGlyphs">1540</text>
<text x="264.22" y="681" font-family="'Liberation Sans', sans-serif" stroke="#000" stroke-width="0.2" font-size="10.5" text-anchor="middle" textLength="23.4" lengthAdjust="spacingAndGlyphs">1550</text>
<text x="300.5" y="681" font-family="'Liberation Sans', sans-serif" stroke="#000" stroke-width="0.2" font-size="10.5" text-anchor="middle" textLength="23.4" lengthAdjust="spacingAndGlyphs">1560</text>
<text x="336.78" y="681" font-family="'Liberation Sans', sans-serif" stroke="#000" stroke-width="0.2" font-size="10.5" text-anchor="middle" textLength="23.4" lengthAdjust="spacingAndGlyphs">1570</text>
<text x="373.06" y="681" font-family="'Liberation Sans', sans-serif" stroke="#000" stroke-width="0.2" font-size="10.5" text-anchor="middle" textLength="23.4" lengthAdjust="spacingAndGlyphs">1580</text>
<text x="409.34" y="681" font-family="'Liberation Sans', sans-serif" stroke="#000" stroke-width="0.2" font-size="10.5" text-anchor="middle" textLength="23.4" lengthAdjust="spacingAndGlyphs">1590</text>
<text x="445.62" y="681" font-family="'Liberation Sans', sans-serif" stroke="#000" stroke-width="0.2" font-size="10.5" text-anchor="middle" textLength="23.4" lengthAdjust="spacingAndGlyphs">1600</text>
<text x="481.9" y="681" font-family="'Liberation Sans', sans-serif" stroke="#000" stroke-width="0.2" font-size="10.5" text-anchor="middle" textLength="23.4" lengthAdjust="spacingAndGlyphs">1610</text>
<text x="518.18" y="681" font-family="'Liberation Sans', sans-serif" stroke="#000" stroke-width="0.2" font-size="10.5" text-anchor="middle" textLength="23.4" lengthAdjust="spacingAndGlyphs">1620</text>
<text x="554.46" y="681" font-family="'Liberation Sans', sans-serif" stroke="#000" stroke-width="0.2" font-size="10.5" text-anchor="middle" textLength="23.4" lengthAdjust="spacingAndGlyphs">1630</text>
<text x="590.74" y="681" font-family="'Liberation Sans', sans-serif" stroke="#000" stroke-width="0.2" font-size="10.5" text-anchor="middle" textLength="23.4" lengthAdjust="spacingAndGlyphs">1640</text>
<text x="627.02" y="681" font-family="'Liberation Sans', sans-serif" stroke="#000" stroke-width="0.2" font-size="10.5" text-anchor="middle" textLength="23.4" lengthAdjust="spacingAndGlyphs">1650</text>
<text x="663.3" y="681" font-family="'Liberation Sans', sans-serif" stroke="#000" stroke-width="0.2" font-size="10.5" text-anchor="middle" textLength="23.4" lengthAdjust="spacingAndGlyphs">1660</text>
<text x="699.58" y="681" font-family="'Liberation Sans', sans-serif" stroke="#000" stroke-width="0.2" font-size="10.5" text-anchor="middle" textLength="23.4" lengthAdjust="spacingAndGlyphs">1670</text>
<text x="735.86" y="681" font-family="'Liberation Sans', sans-serif" stroke="#000" stroke-width="0.2" font-size="10.5" text-anchor="middle" textLength="23.4" lengthAdjust="spacingAndGlyphs">1680</text>
<text x="772.14" y="681" font-family="'Liberation Sans', sans-serif" stroke="#000" stroke-width="0.2" font-size="10.5" text-anchor="middle" textLength="23.4" lengthAdjust="spacingAndGlyphs">1690</text>
<text x="817" y="681" font-family="'Liberation Sans', sans-serif" stroke="#000" stroke-width="0.2" font-size="10.5" text-anchor="middle" textLength="23.4" lengthAdjust="spacingAndGlyphs">1702</text>
<rect x="92" y="664" width="1" height="5" fill="#000"/>
<rect x="817" y="664" width="1" height="5" fill="#000"/>
<text x="453.7" y="697" font-family="'Liberation Mono', monospace" stroke="#000" stroke-width="0.25" font-size="11" text-anchor="middle" textLength="23.5" lengthAdjust="spacingAndGlyphs">Time</text>
<text transform="translate(40.6,579) rotate(-90)" font-family="'Liberation Mono', monospace" stroke="#000" stroke-width="0.25" font-size="11" text-anchor="middle" textLength="53" lengthAdjust="spacingAndGlyphs">Amplitude</text>
<text x="8" y="12.5" font-family="'Liberation Mono', monospace" stroke="#000" stroke-width="0.25" font-size="11" text-anchor="start" textLength="95.2" lengthAdjust="spacingAndGlyphs">Waveform Chart 3</text>
<rect x="736" y="-4" width="105" height="22" fill="#cbcbcb"/>
<rect x="736" y="-4" width="8" height="21" fill="#d6d6d6"/>
<rect x="736" y="-4" width="96" height="2" fill="#dcdcdc"/>
<rect x="832" y="-4" width="1" height="22" fill="#c0c0c0"/>
<rect x="833" y="-4" width="1" height="22" fill="#bdbdbd"/>
<rect x="834" y="-4" width="1" height="22" fill="#b8b8b8"/>
<rect x="835" y="-4" width="1" height="22" fill="#b4b4b4"/>
<rect x="836" y="-4" width="1" height="22" fill="#b0b0b0"/>
<rect x="837" y="-4" width="1" height="22" fill="#a6a6a6"/>
<rect x="838" y="-4" width="1" height="22" fill="#a2a2a2"/>
<rect x="839" y="-4" width="1" height="22" fill="#9c9c9c"/>
<rect x="840" y="-4" width="1" height="22" fill="#989898"/>
<rect x="736" y="17" width="105" height="1" fill="#9a9a9a"/>
<text x="751" y="11" font-family="'Liberation Mono', monospace" stroke="#000" stroke-width="0.25" font-size="11" text-anchor="start" textLength="36" lengthAdjust="spacingAndGlyphs">Plot O</text>
<rect x="798" y="-1.5" width="28" height="16.5" fill="#000"/>
<polyline points="800.2,10.9 808.6,1.6 816.6,10.9 824.9,1.3" fill="none" stroke="#fff" stroke-width="1"/>
<text x="8" y="252.5" font-family="'Liberation Mono', monospace" stroke="#000" stroke-width="0.25" font-size="11" text-anchor="start" textLength="83.3" lengthAdjust="spacingAndGlyphs">Waveform Chart</text>
<rect x="736" y="236" width="105" height="22" fill="#cbcbcb"/>
<rect x="736" y="236" width="8" height="21" fill="#d6d6d6"/>
<rect x="736" y="236" width="96" height="2" fill="#dcdcdc"/>
<rect x="832" y="236" width="1" height="22" fill="#c0c0c0"/>
<rect x="833" y="236" width="1" height="22" fill="#bdbdbd"/>
<rect x="834" y="236" width="1" height="22" fill="#b8b8b8"/>
<rect x="835" y="236" width="1" height="22" fill="#b4b4b4"/>
<rect x="836" y="236" width="1" height="22" fill="#b0b0b0"/>
<rect x="837" y="236" width="1" height="22" fill="#a6a6a6"/>
<rect x="838" y="236" width="1" height="22" fill="#a2a2a2"/>
<rect x="839" y="236" width="1" height="22" fill="#9c9c9c"/>
<rect x="840" y="236" width="1" height="22" fill="#989898"/>
<rect x="736" y="257" width="105" height="1" fill="#9a9a9a"/>
<text x="751" y="251" font-family="'Liberation Mono', monospace" stroke="#000" stroke-width="0.25" font-size="11" text-anchor="start" textLength="36" lengthAdjust="spacingAndGlyphs">Plot O</text>
<rect x="798" y="238.5" width="28" height="16.5" fill="#000"/>
<polyline points="800.2,250.9 808.6,241.6 816.6,250.9 824.9,241.3" fill="none" stroke="#fff" stroke-width="1"/>
<text x="11" y="480.5" font-family="'Liberation Mono', monospace" stroke="#000" stroke-width="0.25" font-size="11" text-anchor="start" textLength="95.2" lengthAdjust="spacingAndGlyphs">Waveform Chart 2</text>
<rect x="736" y="464" width="105" height="22" fill="#cbcbcb"/>
<rect x="736" y="464" width="8" height="21" fill="#d6d6d6"/>
<rect x="736" y="464" width="96" height="2" fill="#dcdcdc"/>
<rect x="832" y="464" width="1" height="22" fill="#c0c0c0"/>
<rect x="833" y="464" width="1" height="22" fill="#bdbdbd"/>
<rect x="834" y="464" width="1" height="22" fill="#b8b8b8"/>
<rect x="835" y="464" width="1" height="22" fill="#b4b4b4"/>
<rect x="836" y="464" width="1" height="22" fill="#b0b0b0"/>
<rect x="837" y="464" width="1" height="22" fill="#a6a6a6"/>
<rect x="838" y="464" width="1" height="22" fill="#a2a2a2"/>
<rect x="839" y="464" width="1" height="22" fill="#9c9c9c"/>
<rect x="840" y="464" width="1" height="22" fill="#989898"/>
<rect x="736" y="485" width="105" height="1" fill="#9a9a9a"/>
<text x="751" y="479" font-family="'Liberation Mono', monospace" stroke="#000" stroke-width="0.25" font-size="11" text-anchor="start" textLength="36" lengthAdjust="spacingAndGlyphs">Plot O</text>
<rect x="798" y="466.5" width="28" height="16.5" fill="#000"/>
<polyline points="800.2,478.9 808.6,469.6 816.6,478.9 824.9,469.3" fill="none" stroke="#fff" stroke-width="1"/>
</svg></body></html>
